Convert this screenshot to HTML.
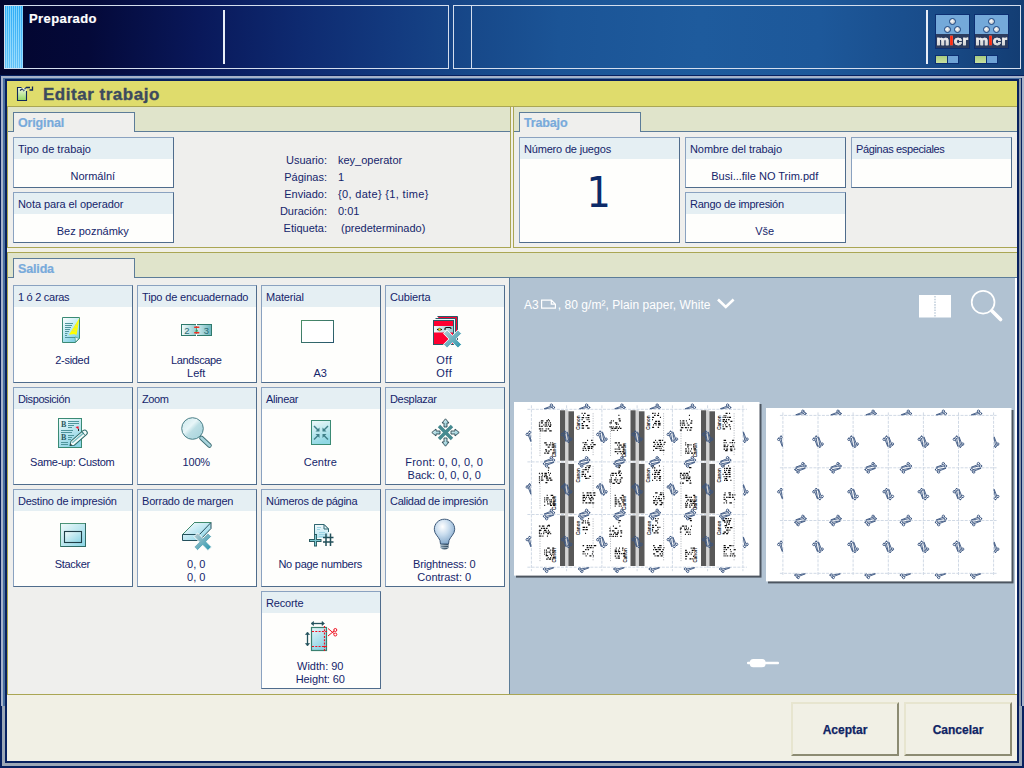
<!DOCTYPE html><html lang="es"><head><meta charset="utf-8"><title>Editar trabajo</title><style>
*{box-sizing:border-box;margin:0;padding:0}
html,body{width:1024px;height:768px;overflow:hidden}
body{position:relative;font-family:"Liberation Sans","DejaVu Sans",sans-serif;font-size:11px;color:#15256b;
 background:linear-gradient(92deg,#03062f 0px,#040939 90px,#09185a 200px,#0e2a70 300px,#133b80 400px,#174889 470px,#1b5496 560px,#1e5b9d 700px,#1d589a 820px,#194c8a 930px,#133d73 1024px);}
.abs{position:absolute}
#top{position:absolute;left:0;top:0;width:1024px;height:76px;overflow:hidden}
.pan{position:absolute;top:5px;height:64px;border:1px solid #d4deee}
.vsep{position:absolute;background:#e8eef8}
#stripe{position:absolute;left:5px;top:6px;width:18px;height:62px;background:linear-gradient(rgba(255,255,255,0),rgba(255,255,255,.25)),repeating-linear-gradient(90deg,#2eacf6 0,#2eacf6 1px,#7cd2fd 1px,#7cd2fd 2px)}
#prep{position:absolute;left:29px;top:11px;font-weight:bold;font-size:13px;letter-spacing:.4px;color:#fff;-webkit-text-stroke:.2px #fff;line-height:16px}
.micr{position:absolute;top:15px;width:33px;height:33px;background:#2c3c5e;outline:1px solid #0c2f72}
.micr .t{position:absolute;left:0;top:0;width:33px;height:19px;background:#74a9d9}
.micr b{position:absolute;left:-1px;top:18px;width:35px;text-align:center;font-size:13.5px;line-height:16px;letter-spacing:.5px;-webkit-text-stroke:.7px #e4e4e4;background:linear-gradient(#fff 25%,#c8c8c8 80%);-webkit-background-clip:text;background-clip:text;color:transparent;transform:scaleX(1.04)}
.micr b i{font-style:normal;-webkit-text-stroke:.7px #ff2a10;color:#ff2a10}
.micr s{position:absolute;width:7px;height:7px;border-radius:50%;background:radial-gradient(circle at 40% 40%,#fff,#a8b0b8);border:1px solid #1f457e;text-decoration:none}
.bar{position:absolute;top:56px;height:7px;outline:1px solid #0c2f72}
/* dialog frame */
#frame{position:absolute;left:0;top:75px;width:1024px;height:693px;background:#08215f}
#f1{position:absolute;left:1px;top:1px;right:1px;bottom:1px;background:#a7b3ca}
#f2{position:absolute;left:3px;top:3px;right:3px;bottom:3px;background:#4a70a0}
#f3{position:absolute;left:5px;top:4px;right:4px;bottom:4px;background:#08215f}
#dlg{position:absolute;left:7px;top:81px;width:1010px;height:680px;background:#f1f0e5;overflow:hidden}
#title{position:absolute;left:0;top:0;width:1010px;height:26px;background:#dfdc6c;border-bottom:1px solid #b4ac54}
#title span{position:absolute;left:36px;top:3px;font-weight:bold;font-size:17px;letter-spacing:.52px;color:#3c4a5e;-webkit-text-stroke:.35px #3c4a5e;line-height:22px}
.sec{position:absolute;background:#e0e4cb;border:1px solid #aaa654}
.sec .body{position:absolute;left:0;right:0;top:24px;bottom:0;background:#efefed;border-top:1px solid #5c7c98}
.tab{position:absolute;left:5px;top:5px;width:122px;height:20px;background:#efefed;border:1px solid #5c7c98;border-bottom:none;
 font-weight:bold;font-size:12.5px;letter-spacing:-.15px;color:#78aadb;-webkit-text-stroke:.2px #78aadb;padding:3px 0 0 4px;line-height:15px}
.box{position:absolute;background:#fefefc;border:1px solid #8aa2c0;border-right-color:#4f6c8c;border-bottom-color:#4f6c8c}
.box .h{position:absolute;left:0;top:0;right:0;height:21px;background:#e5eff3;padding:5px 0 0 4px;line-height:13px;white-space:nowrap}
.box .v{position:absolute;left:0;right:1.5px;text-align:center;line-height:13px;white-space:nowrap}
.kv{position:absolute;line-height:13px;white-space:nowrap}
.btn{position:absolute;top:621px;width:108px;height:54px;background:#f1f0e5;border:2px solid;border-color:#e7e5cf #8c8b72 #8c8b72 #e7e5cf;
 font-weight:bold;font-size:12px;text-align:center;line-height:53px;color:#0f2464;-webkit-text-stroke:.25px #0f2464}
#pv{position:absolute;left:502px;top:196px;width:508px;height:417px;background:#b1c2d2;border-left:1px solid #5c7c98;border-top:1px solid #5c7c98}
#pvt{position:absolute;left:14px;top:20px;font-size:12px;color:#fff;line-height:14px;white-space:nowrap;letter-spacing:.05px}
</style></head><body><div id="top"><div class="pan" style="left:4px;width:445px"></div><div id="stripe"></div><div id="prep">Preparado</div><div class="vsep" style="left:223px;top:10px;width:2px;height:54px"></div><div class="pan" style="left:453px;width:568px"></div><div class="vsep" style="left:471px;top:6px;width:1px;height:62px;background:#d4deee"></div><div class="vsep" style="left:926px;top:10px;width:2px;height:54px"></div><div class="micr" style="left:936px"><div class="t"></div><s style="left:12.7px;top:3.2px"></s><s style="left:7.5px;top:10.7px"></s><s style="left:17.7px;top:10.7px"></s><b>m<i>i</i>cr</b></div><div class="bar" style="left:936px;width:11px;background:linear-gradient(#a8cc80,#c8e0a0)"></div><div class="bar" style="left:948px;width:10px;background:#6fa3d6"></div><div class="micr" style="left:975px"><div class="t"></div><s style="left:12.7px;top:3.2px"></s><s style="left:7.5px;top:10.7px"></s><s style="left:17.7px;top:10.7px"></s><b>m<i>i</i>cr</b></div><div class="bar" style="left:975px;width:11px;background:linear-gradient(#a8cc80,#c8e0a0)"></div><div class="bar" style="left:987px;width:10px;background:#6fa3d6"></div></div><div id="frame"><div id="f1"></div><div id="f2"></div><div id="f3"></div><div class="abs" style="left:1019px;top:4px;width:2px;height:627px;background:#8c97a6"></div><div class="abs" style="left:1021px;top:3px;width:1px;height:628px;background:#08215f"></div><div class="abs" style="left:1022px;top:1px;width:2px;height:630px;background:#a7b3ca"></div><div class="abs" style="left:0;top:631px;width:1024px;height:62px;background:#08215f"></div><div class="abs" style="left:2px;top:631px;width:1020px;height:60px;background:#9ba7b6"></div><div class="abs" style="left:5px;top:631px;width:1014px;height:57px;background:#08215f"></div></div><div id="dlg"><div id="title"><svg class="abs" style="left:9px;top:5px" width="19" height="16" viewBox="0 0 19 16"><defs><linearGradient id="gt" x1="0" y1="0" x2="0" y2="1"><stop offset="0" stop-color="#f0f8e0"/><stop offset="1" stop-color="#94d860"/></linearGradient></defs><rect x="2" y="2" width="8.500" height="12.500" fill="url(#gt)"/><path d="M5.500 1.500 H1.500 V14.500 H10.500 V5" fill="none" stroke="#10285c" stroke-width="1.100"/><path d="M4 4.500 L6 3 L7.500 4.500 L10.500 1.500 H14 M16.500 .5 V4 H13.500" fill="none" stroke="#10285c" stroke-width="1.300"/><path d="M6 4.500 L10.500 2.800" stroke="#e8f0e0" stroke-width=".8"/></svg><span>Editar trabajo</span></div><div class="sec" style="left:0px;top:25px;width:504px;height:142px"><div class="body"></div><div class="tab">Original</div><div class="box" style="left:5px;top:30px;width:161px;height:51px"><div class="h">Tipo de trabajo</div><div class="v" style="top:32px">Normální</div></div><div class="box" style="left:5px;top:85px;width:161px;height:51px"><div class="h" style="letter-spacing:-0.08px">Nota para el operador</div><div class="v" style="top:32px">Bez poznámky</div></div><div class="kv" style="right:183px;top:47px;text-align:right">Usuario:</div><div class="kv" style="left:330px;top:47px">key_operator</div><div class="kv" style="right:183px;top:64px;text-align:right">Páginas:</div><div class="kv" style="left:330px;top:64px">1</div><div class="kv" style="right:183px;top:81px;text-align:right">Enviado:</div><div class="kv" style="left:330px;top:81px"><span style="letter-spacing:.33px">{0, date} {1, time}</span></div><div class="kv" style="right:183px;top:98px;text-align:right">Duración:</div><div class="kv" style="left:330px;top:98px">0:01</div><div class="kv" style="right:183px;top:115px;text-align:right">Etiqueta:</div><div class="kv" style="left:333px;top:115px">(predeterminado)</div></div><div class="sec" style="left:506px;top:25px;width:504px;height:142px;border-right:none"><div class="body"></div><div class="tab">Trabajo</div><div class="box" style="left:5px;top:30px;width:161px;height:106px"><div class="h" style="letter-spacing:-0.18px">Número de juegos</div><div class="v" style="top:30px;font-family:'DejaVu Sans Condensed','DejaVu Sans','Liberation Sans',sans-serif;font-size:42.5px;line-height:50px;color:#0c2a68">1</div></div><div class="box" style="left:171px;top:30px;width:161px;height:51px"><div class="h" style="letter-spacing:-0.09px">Nombre del trabajo</div><div class="v" style="top:32px">Busi...file NO Trim.pdf</div></div><div class="box" style="left:337px;top:30px;width:161px;height:51px"><div class="h" style="letter-spacing:-0.35px">Páginas especiales</div></div><div class="box" style="left:171px;top:85px;width:161px;height:51px"><div class="h" style="letter-spacing:-0.26px">Rango de impresión</div><div class="v" style="top:32px">Vše</div></div></div><div class="sec" style="left:0px;top:171px;width:1010px;height:443px;border-right:none"><div class="body"></div><div class="tab">Salida</div><div class="box" style="left:5px;top:32px;width:120px;height:98px"><div class="h" style="letter-spacing:-0.28px">1 ó 2 caras</div><div class="abs" style="left:0;top:0"><svg class="abs" style="left:48px;top:31px" width="19" height="27" viewBox="0 0 19 27" ><defs><linearGradient id="g1" x1="0" y1="0" x2=".6" y2="1"><stop offset="0" stop-color="#ffffff"/><stop offset=".5" stop-color="#c4ecf4"/><stop offset="1" stop-color="#7fd0e4"/></linearGradient></defs><path d="M.5 .5 H17.500 V21.500 L13.500 25.500 H.5 Z" fill="url(#g1)" stroke="#3a8a74" stroke-width="1"/><path d="M3 6.500 H11 M3 8.500 H10 M3 10.500 H9 M3 12.500 H8 M3 14.500 H7 M3 16.500 H5.500 M3 18.500 H5 M3 20.500 H13" stroke="#4f959c" stroke-width="1" fill="none"/><path d="M17.500 1 L7 17.800 L12 17 L14.500 18 Z" fill="#ffff00"/><path d="M13.5 7.5 l2 .7 M12 10.500 l2.500 .8 M10.500 13.500 l3 .8" stroke="#d8e070" stroke-width="1" fill="none"/><path d="M13 20 L17 21.500 L13.500 25 Z" fill="#e8f8fc" stroke="#3a8a74" stroke-width=".6"/></svg></div><div class="v" style="top:68px;letter-spacing:-0.3px">2-sided</div></div><div class="box" style="left:129px;top:32px;width:120px;height:98px"><div class="h" style="letter-spacing:-0.17px">Tipo de encuadernado</div><div class="abs" style="left:0;top:0"><svg class="abs" style="left:43px;top:38px" width="32" height="13" viewBox="0 0 32 13" ><defs><linearGradient id="g2a" x1="0" y1="0" x2="1" y2="0"><stop offset="0" stop-color="#f4fcfc"/><stop offset="1" stop-color="#8cc8cc"/></linearGradient><linearGradient id="g2b" x1="0" y1="0" x2="1" y2="0"><stop offset="0" stop-color="#d4eef0"/><stop offset="1" stop-color="#6cb4bc"/></linearGradient></defs><rect x=".5" y=".5" width="15.500" height="11" fill="url(#g2a)"/><rect x="15.5" y=".5" width="15" height="11" fill="url(#g2b)"/><rect x=".5" y=".5" width="30" height="11" fill="none" stroke="#2f7a6c"/><path d="M15.500 2 V10" stroke="#2f7a6c" stroke-width=".7"/><rect x="15" y="0" width="1" height="2" fill="#fff"/><rect x="15" y="10" width="1" height="2" fill="#fff"/><text x="6" y="9.800" font-family="Liberation Sans,sans-serif" font-size="9.500" fill="#2a6a72" text-anchor="middle">2</text><text x="25.500" y="9.800" font-family="Liberation Sans,sans-serif" font-size="9.500" fill="#2a6a72" text-anchor="middle">3</text><rect x="13" y="2.500" width="5.500" height="1.600" rx=".8" fill="#f03020"/><rect x="13" y="8" width="5.500" height="1.600" rx=".8" fill="#f03020"/><path d="M14 7.500 L15.700 5 L17.500 7.500 Z" fill="#3c9a60"/></svg></div><div class="v" style="top:68px;letter-spacing:-0.35px">Landscape</div><div class="v" style="top:81px">Left</div></div><div class="box" style="left:253px;top:32px;width:120px;height:98px"><div class="h" style="letter-spacing:-0.16px">Material</div><div class="abs" style="left:0;top:0"><svg class="abs" style="left:39px;top:34px" width="33" height="23" viewBox="0 0 33 23" ><defs><linearGradient id="g3" x1="0" y1="0" x2="1" y2="1"><stop offset="0" stop-color="#4c9068"/><stop offset="1" stop-color="#27566c"/></linearGradient></defs><rect x=".5" y=".5" width="32" height="22" fill="#fff" stroke="url(#g3)"/></svg></div><div class="v" style="top:81px">A3</div></div><div class="box" style="left:377px;top:32px;width:120px;height:98px"><div class="h" style="letter-spacing:-0.15px">Cubierta</div><div class="abs" style="left:0;top:0"><svg class="abs" style="left:46px;top:29px" width="31" height="34" viewBox="0 0 31 34" ><defs><linearGradient id="gx" x1="0" y1="0" x2="1" y2="1"><stop offset="0" stop-color="#b9cdd3"/><stop offset=".5" stop-color="#6fb1c0"/><stop offset="1" stop-color="#2796ad"/></linearGradient><linearGradient id="g4" x1="0" y1="0" x2="1" y2="0"><stop offset="0" stop-color="#f4fafa"/><stop offset="1" stop-color="#9cc8d0"/></linearGradient></defs><path d="M5.500 1.500 H25.500 V25 H22" fill="#ff0030" stroke="#2a5a68" stroke-width="1"/><path d="M3.500 3.500 H23.500 V27 H20" fill="#e8f4f8" stroke="#2a5a68" stroke-width="1"/><rect x="1.500" y="5.500" width="20" height="24" fill="#ff0030" stroke="#2a5a68" stroke-width="1"/><rect x="2" y="11" width="19" height="6.500" fill="url(#g4)"/><path d="M5 14.500 H10" stroke="#111" stroke-width="1.200"/><circle cx="7.500" cy="14.500" r="1.300" fill="#ffe000" stroke="#333" stroke-width=".5"/><path d="M13 15 V13.500 Q13 12.500 14.500 12.500 H18 Q19 12.500 19 14" stroke="#111" stroke-width="1.200" fill="none"/><g transform="translate(11.5,15)"><path d="M3.6 0 L9.0 5.4 L14.4 0 L18 3.6 L12.6 9.0 L18 14.4 L14.4 18 L9.0 12.6 L3.6 18 L0 14.4 L5.4 9.0 L0 3.6 Z" fill="url(#gx)" stroke="#fefefc" stroke-width="1" stroke-opacity=".9"/></g></svg></div><div class="v" style="top:68px;letter-spacing:0.5px">Off</div><div class="v" style="top:81px;letter-spacing:0.5px">Off</div></div><div class="box" style="left:5px;top:134px;width:120px;height:98px"><div class="h" style="letter-spacing:-0.4px">Disposición</div><div class="abs" style="left:0;top:0"><svg class="abs" style="left:44px;top:30px" width="32" height="31" viewBox="0 0 32 31" ><defs><linearGradient id="g5" x1="0" y1="0" x2=".5" y2="1"><stop offset="0" stop-color="#f4fcfc"/><stop offset="1" stop-color="#8cd4e4"/></linearGradient></defs><rect x=".5" y=".5" width="23" height="29" fill="url(#g5)" stroke="#3a8a74"/><text x="3" y="9" font-family="Liberation Serif,serif" font-weight="bold" font-size="8" fill="#2a5a60">B</text><text x="3" y="22" font-family="Liberation Serif,serif" font-weight="bold" font-size="8" fill="#2a5a60">B</text><path d="M10 3.500 H21 M10 5.500 H21 M10 7.500 H16 M10 9.500 H14 M3 12.500 H15 M3 14.500 H14 M10 17.500 H16 M10 19.500 H14 M10 21.500 H13 M3 24.500 H10 M3 26.500 H10" stroke="#4f959c" stroke-width="1" fill="none"/><path d="M17.500 9 L20.500 8.300 L20.700 11.500 Z" fill="#f01030"/><path d="M20.500 11 V13" stroke="#222" stroke-width="1"/><g transform="translate(12,27.500) rotate(-41)"><path d="M0 0 L3.500 -2.600 H19.500 Q22 -2.600 22 0 Q22 2.600 19.500 2.600 H3.500 Z" fill="#f4fafa" stroke="#2a6a68" stroke-width="1"/><path d="M3.500 -.6 H19" stroke="#7cc0c4" stroke-width="1.500"/><path d="M18 -2.600 V2.600" stroke="#2a6a68" stroke-width=".8"/><path d="M0 0 L1.800 -1.100 V1.100 Z" fill="#222"/></g></svg></div><div class="v" style="top:68px;letter-spacing:-0.29px">Same-up: Custom</div></div><div class="box" style="left:129px;top:134px;width:120px;height:98px"><div class="h" style="letter-spacing:-0.4px">Zoom</div><div class="abs" style="left:0;top:0"><svg class="abs" style="left:42px;top:28px" width="33" height="33" viewBox="0 0 33 33" ><defs><linearGradient id="g6" x1="0" y1="0" x2="1" y2="1"><stop offset="0" stop-color="#c8e6ea"/><stop offset=".4" stop-color="#e8f6f8"/><stop offset=".55" stop-color="#bcdee4"/><stop offset="1" stop-color="#a4d2da"/></linearGradient></defs><path d="M21.500 22 L29.500 29.500" stroke="#3e6e74" stroke-width="4.600" stroke-linecap="round"/><path d="M21.500 22 L29.500 29.500" stroke="#a8d4dc" stroke-width="2.800" stroke-linecap="round"/><circle cx="12.500" cy="12.500" r="10.800" fill="url(#g6)" stroke="#4c8088" stroke-width="1"/></svg></div><div class="v" style="top:68px;letter-spacing:-0.2px">100%</div></div><div class="box" style="left:253px;top:134px;width:120px;height:98px"><div class="h" style="letter-spacing:-0.29px">Alinear</div><div class="abs" style="left:0;top:0"><svg class="abs" style="left:49px;top:32px" width="21" height="26" viewBox="0 0 21 26" ><defs><linearGradient id="g7" x1="0" y1="0" x2=".3" y2="1"><stop offset="0" stop-color="#f0fafa"/><stop offset="1" stop-color="#90d8e4"/></linearGradient></defs><rect x=".5" y=".5" width="19" height="24" fill="url(#g7)" stroke="#3a8a74"/><g stroke="#3f8088" stroke-width="1.500" fill="#3f8088"><path d="M3 6 L7.500 10.500"/><path d="M17 6 L12.500 10.500"/><path d="M3 19.500 L7.500 15"/><path d="M17 19.500 L12.500 15"/></g><path d="M4.500 11.500 H8.500 V7.500 Z M15.500 11.500 H11.500 V7.500 Z M4.500 14 H8.500 V18 Z M15.500 14 H11.500 V18 Z" fill="#3f8088"/></svg></div><div class="v" style="top:68px">Centre</div></div><div class="box" style="left:377px;top:134px;width:120px;height:98px"><div class="h" style="letter-spacing:-0.32px">Desplazar</div><div class="abs" style="left:0;top:0"><svg class="abs" style="left:45px;top:30px" width="29" height="29" viewBox="0 0 29 29" ><defs><linearGradient id="g8" x1="0" y1="0" x2="1" y2="1"><stop offset="0" stop-color="#e8f6f8"/><stop offset="1" stop-color="#7cc0cc"/></linearGradient></defs><g stroke="#2c4a54" stroke-width=".9" fill="url(#g8)"><path d="M14.500 .8 L18 5 H16 V9 H13 V5 H11 Z"/><path d="M14.500 28.200 L18 24 H16 V20 H13 V24 H11 Z"/><path d="M.8 14.500 L5 11 V13 H9 V16 H5 V18 Z"/><path d="M28.200 14.500 L24 11 V13 H20 V16 H24 V18 Z"/></g><path d="M8 8 L21 21 M21 8 L8 21" stroke="#468a90" stroke-width="3.400"/></svg></div><div class="v" style="top:68px;letter-spacing:0.19px">Front: 0, 0, 0, 0</div><div class="v" style="top:81px">Back: 0, 0, 0, 0</div></div><div class="box" style="left:5px;top:236px;width:120px;height:98px"><div class="h" style="letter-spacing:-0.23px">Destino de impresión</div><div class="abs" style="left:0;top:0"><svg class="abs" style="left:46px;top:33px" width="27" height="25" viewBox="0 0 27 25" ><defs><linearGradient id="g9" x1="0" y1="0" x2="1" y2="1"><stop offset="0" stop-color="#f0fafa"/><stop offset="1" stop-color="#88d4e4"/></linearGradient></defs><rect x=".5" y=".5" width="25" height="23" fill="url(#g9)" stroke="#2f6a64"/><path d="M.5 24 V.5 H25" stroke="#4c9478" fill="none"/><rect x="4.500" y="8.500" width="17" height="11" fill="url(#g9)" stroke="#1f3f48" stroke-width="1.100"/></svg></div><div class="v" style="top:68px;letter-spacing:-0.32px">Stacker</div></div><div class="box" style="left:129px;top:236px;width:120px;height:98px"><div class="h" style="letter-spacing:-0.21px">Borrado de margen</div><div class="abs" style="left:0;top:0"><svg class="abs" style="left:43px;top:31px" width="32" height="31" viewBox="0 0 32 31" ><defs><linearGradient id="gx2" x1="0" y1="0" x2="1" y2="1"><stop offset="0" stop-color="#b9cdd3"/><stop offset=".5" stop-color="#6fb1c0"/><stop offset="1" stop-color="#2796ad"/></linearGradient><linearGradient id="g10" x1="0" y1="0" x2="1" y2="1"><stop offset="0" stop-color="#ffffff"/><stop offset="1" stop-color="#7fd0e4"/></linearGradient></defs><path d="M1.500 13.500 L13.500 1.500 H30 V7.500 L18.500 19.500 H1.500 Z" fill="url(#g10)" stroke="#24505c" stroke-width="1"/><path d="M1.500 13.500 H18.500 L30 1.500 M18.500 13.500 V19.500" fill="none" stroke="#24505c" stroke-width="1"/><path d="M1.500 13.500 L13.500 1.500 H30" fill="none" stroke="#3f8a6c" stroke-width="1"/><g transform="translate(13,12)"><path d="M3.6 0 L8.75 5.15 L13.9 0 L17.5 3.6 L12.35 8.75 L17.5 13.9 L13.9 17.5 L8.75 12.35 L3.6 17.5 L0 13.9 L5.15 8.75 L0 3.6 Z" fill="url(#gx2)" stroke="#fefefc" stroke-width="1" stroke-opacity=".9"/></g></svg></div><div class="v" style="top:68px">0, 0</div><div class="v" style="top:81px">0, 0</div></div><div class="box" style="left:253px;top:236px;width:120px;height:98px"><div class="h" style="letter-spacing:-0.28px">Números de página</div><div class="abs" style="left:0;top:0"><svg class="abs" style="left:46px;top:33px" width="27" height="25" viewBox="0 0 27 25" ><defs><linearGradient id="g11" x1="0" y1="0" x2="0" y2="1"><stop offset="0" stop-color="#f4fafc"/><stop offset="1" stop-color="#b4e4f0"/></linearGradient></defs><path d="M6.500 10 V1.500 H16 L20.500 6 V9" fill="url(#g11)" stroke="#2f6670" stroke-width="1"/><path d="M6.500 1.500 H16 L20.500 6 V15 H6.500 Z" fill="url(#g11)" stroke="none"/><path d="M6.500 11 V1.500 H16 L20.500 6 V9 M16 1.500 V6 H20.500" fill="none" stroke="#2f6670" stroke-width="1"/><path d="M9 4.500 H13 M9 6.500 H12 M11 9.500 H17 M11 11.500 H17 M11 13.500 H15" stroke="#9cd4e4" stroke-width="1"/><path d="M7.500 11 V23.500 M1 17.500 H13.500" stroke="#2a5a60" stroke-width="3"/><path d="M7.500 12 V22.500 M2 17.500 H12.500" stroke="#7cc8d0" stroke-width="1.200"/><path d="M18 10.500 V23 M22.500 10.500 V23 M15 14.500 H25.500 M15 19 H25.500" stroke="#23505a" stroke-width="1.500"/></svg></div><div class="v" style="top:68px;letter-spacing:-0.25px">No page numbers</div></div><div class="box" style="left:377px;top:236px;width:120px;height:98px"><div class="h" style="letter-spacing:-0.28px">Calidad de impresión</div><div class="abs" style="left:0;top:0"><svg class="abs" style="left:47px;top:28px" width="23" height="33" viewBox="0 0 23 33" ><defs><radialGradient id="g12" cx=".4" cy=".3" r=".75"><stop offset="0" stop-color="#ffffff"/><stop offset=".45" stop-color="#c8dcee"/><stop offset="1" stop-color="#7ea4c8"/></radialGradient><linearGradient id="g12b" x1="0" y1="0" x2="1" y2="0"><stop offset="0" stop-color="#7e98ac"/><stop offset=".5" stop-color="#4e687c"/><stop offset="1" stop-color="#30485c"/></linearGradient></defs><path d="M11.500 1.200 C5.500 1.200 1.300 5.800 1.300 11.300 C1.300 16 5.500 18.500 7 22.500 L7.500 26 H15.500 L16 22.500 C17.500 18.500 21.700 16 21.700 11.300 C21.700 5.800 17.500 1.200 11.500 1.200 Z" fill="url(#g12)" stroke="#3c5878" stroke-width="1"/><path d="M7.500 26 H15.500 V30 Q11.500 33 7.500 30 Z" fill="url(#g12b)"/><path d="M7.500 27.500 H15.500 M7.500 29.500 H15.500" stroke="#b4c4d0" stroke-width=".7"/></svg></div><div class="v" style="top:68px;letter-spacing:-0.13px">Brightness: 0</div><div class="v" style="top:81px">Contrast: 0</div></div><div class="box" style="left:253px;top:338px;width:120px;height:98px"><div class="h" style="letter-spacing:-0.17px">Recorte</div><div class="abs" style="left:0;top:0"><svg class="abs" style="left:41px;top:27px" width="37" height="34" viewBox="0 0 37 34" ><defs><linearGradient id="g13" x1="0" y1="0" x2=".5" y2="1"><stop offset="0" stop-color="#e8f6fa"/><stop offset="1" stop-color="#8cd4e4"/></linearGradient></defs><rect x="8.500" y="8.500" width="15" height="23" fill="url(#g13)" stroke="#3a8070" stroke-width="1.200"/><path d="M9 12.500 H24 M9 27.500 H24 M21.500 7 V32" stroke="#f01020" stroke-width="1.200" stroke-dasharray="2 1.300" fill="none"/><g stroke="#23525c" stroke-width="1.300" fill="#23525c"><path d="M9.500 4.500 H20"/><path d="M8 4.500 L10.500 2.500 V6.500 Z M21.500 4.500 L19 2.500 V6.500 Z" stroke-width=".6"/><path d="M4.500 14.500 V25.500"/><path d="M4.500 13 L2.500 15.500 H6.500 Z M4.500 27 L2.500 24.500 H6.500 Z" stroke-width=".6"/></g><g stroke="#f01020" stroke-width="1" fill="none"><path d="M25 9.500 L31 14.500 M25 17 L31 12"/><circle cx="32.300" cy="11" r="1.500"/><circle cx="32.300" cy="15.500" r="1.500"/></g></svg></div><div class="v" style="top:68px">Width: 90</div><div class="v" style="top:81px;letter-spacing:-0.1px">Height: 60</div></div></div><div id="pv"><div id="pvt">A3 <span style="display:inline-block;width:15.5px"></span>, 80 g/m², Plain paper, White</div><svg class="abs" style="left:0;top:0" width="505" height="416" viewBox="510 278 505 416" font-family="DejaVu Sans,Liberation Sans,sans-serif"><path d="M541.6 300.1 H551.3 L555.4 304.2 V308.1 H541.6 Z M551.3 300.1 V304.2 H555.4" fill="none" stroke="#fff" stroke-width="1.2"/><path d="M718 299.5 L725.8 307 L733.6 299.5" fill="none" stroke="#fff" stroke-width="2.6"/><rect x="919" y="295" width="32" height="22.500" fill="#fff"/><path d="M935 296 V317" stroke="#b1c2d2" stroke-width="1.200" stroke-dasharray="1.600 1.100"/><circle cx="983.100" cy="302.200" r="11.400" fill="none" stroke="#fff" stroke-width="1.700"/><path d="M991.800 310.800 L1000.600 319.600" stroke="#fff" stroke-width="3.600" stroke-linecap="round"/><rect x="747" y="661.800" width="32" height="2.400" rx="1" fill="#fff"/><rect x="749.800" y="659" width="15.800" height="8.200" rx="3.500" fill="#fff"/><rect x="516" y="404" width="245.5" height="173.6" fill="#4c5560"/><rect x="514" y="402" width="245.5" height="173.6" fill="#fff"/><path d="M531.4 405.3V571.2M566.6 405.3V571.2M601.9 405.3V571.2M637.1 405.3V571.2M672.4 405.3V571.2M707.6 405.3V571.2M742.9 405.3V571.2M527.4 409.3H746.9M527.4 461.9H746.9M527.4 514.5H746.9M527.4 567.2H746.9" stroke="#d0d9e5" stroke-width="1" stroke-dasharray="3 1.2" fill="none"/><g fill="#d4d4d4"><rect x="565.1" y="410.3" width="3.2" height="155.9"/><rect x="635.6" y="410.3" width="3.2" height="155.9"/><rect x="706.1" y="410.3" width="3.2" height="155.9"/></g><g fill="#585858"><rect x="560" y="410.3" width="5.1" height="50.4"/><rect x="568.4" y="411.3" width="5.6" height="49.4"/><rect x="560" y="462.9" width="5.1" height="50.4"/><rect x="568.4" y="463.9" width="5.6" height="49.4"/><rect x="560" y="515.5" width="5.1" height="50.5"/><rect x="568.4" y="516.5" width="5.6" height="49.5"/><rect x="630.5" y="410.3" width="5.1" height="50.4"/><rect x="638.9" y="411.3" width="5.6" height="49.4"/><rect x="630.5" y="462.9" width="5.1" height="50.4"/><rect x="638.9" y="463.9" width="5.6" height="49.4"/><rect x="630.5" y="515.5" width="5.1" height="50.5"/><rect x="638.9" y="516.5" width="5.6" height="49.5"/><rect x="701" y="410.3" width="5.1" height="50.4"/><rect x="709.4" y="411.3" width="5.6" height="49.4"/><rect x="701" y="462.9" width="5.1" height="50.4"/><rect x="709.4" y="463.9" width="5.6" height="49.4"/><rect x="701" y="515.5" width="5.1" height="50.5"/><rect x="709.4" y="516.5" width="5.6" height="49.5"/></g><path d="M540.9 420.8h2.5M546.2 420.8h2M549 420.8h1M538.9 422.8h1M540.9 422.8h2M544.7 422.8h2.5M548.2 422.8h1M550 422.8h1M538.9 424.8h1M543.4 424.8h1M545.4 424.8h1.5M547.9 424.8h1M549.9 424.8h1.5M538.9 426.4h1.5M541.2 426.4h1.5M544.7 426.4h1M546.5 426.4h1M549 426.4h2M538.9 428.8h2.5M542.2 428.8h1M545.7 428.8h1M547.7 428.8h1.5M539.9 430.8h1.5M542.4 430.8h1M544.2 430.8h2.5M549.2 430.8h2.5M547.9 419.7h1M544.2 442.8h2.5M550.2 442.8h1M552.2 442.8h1M545.7 444.8h2M548.7 444.8h2M551.7 444.8h2.5M547.7 447.2h2M551.7 447.2h2.5M545.2 449.6h1.5M550.2 449.6h1.5M545.7 451.2h1.5M548.2 451.2h1.5M544.2 453.2h1.5M546.7 453.2h2.5M552.2 453.2h1.5M581.6 413.3h1M584.1 413.3h1.5M583.1 415.3h1M587.1 415.3h2.5M581.6 417.7h2.5M585.6 417.7h1M587.4 417.7h2M581.6 419.7h1M586.6 419.7h1M588.4 419.7h1M583.1 421.7h2M588.6 421.7h1.5M581.6 423.7h1.5M581.6 425.7h2.5M585.6 425.7h2.5M581.6 428.1h2.5M587.1 428.1h2.5M587.1 440.3h1M591.1 440.3h1.5M582.6 442.7h1M584.6 442.7h2M591.6 442.7h2M584.1 444.7h1.5M586.4 444.7h1M590.4 444.7h1M593.2 444.7h2.5M583.6 446.7h1.5M587.4 446.7h2.5M590.9 446.7h2.5M582.6 448.3h1M584.6 448.3h1.5M587.6 448.3h2.5M590.9 448.3h1.5M582.6 450.3h1.5M585.6 450.3h1M588.1 450.3h1M610.9 420.8h1M612.9 420.8h1M618.9 420.8h2M609.4 422.8h2.5M614.9 422.8h2.5M615.9 424.4h1M617.7 424.4h1M609.4 426.8h2.5M612.7 426.8h1M615.5 426.8h2M619 426.8h1M611.4 428.4h2M614.2 428.4h2.5M617.7 428.4h1.5M620 428.4h1.5M611.4 430.4h1M613.4 430.4h1M616.9 430.4h1M618.4 415.3h1M618.4 418.9h2M614.7 442.8h2.5M618 442.8h2M617.2 445.2h1M619.2 445.2h2.5M623.2 445.2h2M618.2 447.2h1.5M621.2 447.2h2.5M614.7 449.2h1M616.5 449.2h1M618.3 449.2h2M622.8 449.2h1.5M614.7 451.6h2M617.5 451.6h1M619.3 451.6h2M622.3 451.6h1.5M617.2 453.6h1M620.7 453.6h1M623.2 453.6h2M652.1 413.3h1.5M654.6 413.3h1M658.1 413.3h1M654.1 415.3h1.5M657.1 415.3h2M652.1 417.3h2M659.9 417.3h1M652.1 419.7h1M655.1 421.3h2M657.9 421.3h2M654.1 423.3h2.5M658.1 423.3h2.5M653.1 424.9h1M655.6 424.9h1M658.1 424.9h2.5M652.1 427.3h2M657.6 427.3h1.5M655.1 440.3h1M658.6 440.3h2.5M661.9 440.3h1M653.1 442.3h2M656.6 442.3h1M659.6 442.3h1.5M664.1 442.3h1.5M654.6 444.3h1M657.1 444.3h2M660.1 444.3h2M663.6 444.3h1M653.1 446.3h2M656.6 446.3h1M658.4 446.3h2.5M661.7 446.3h1M655.1 448.3h2.5M658.6 448.3h1M660.6 448.3h1M653.1 450.3h1M659.6 450.3h2M662.4 450.3h2M679.9 420.8h1M682.4 420.8h2M685.9 420.8h1M690.9 420.8h1.5M679.9 423.2h1.5M682.2 423.2h2.5M686.7 423.2h1M690.2 423.2h2M679.9 425.2h1M681.9 425.2h1M683.7 425.2h1.5M687.5 425.2h2M680.9 427.6h2.5M684.9 427.6h2M687.7 427.6h1M690.2 427.6h2M679.9 430h2M686.9 430h1M689.4 430h2M688.9 415.3h1M688.9 419.3h1M685.2 442.8h1M685.2 444.8h1M687 444.8h2.5M690.5 444.8h1M693 444.8h1M687.2 446.8h1.5M693 446.8h1M685.2 448.8h1.5M688.2 448.8h1M691 448.8h1M693.5 448.8h2.5M685.2 451.2h2M688.2 451.2h1M690.2 451.2h1M685.2 453.2h1M687 453.2h2.5M691 453.2h2M693.8 453.2h1M725.6 413.3h2M729.1 413.3h1M723.6 415.7h1M725.4 415.7h1M722.6 417.3h1M724.4 417.3h1.5M726.7 417.3h1M728.5 417.3h2.5M722.6 419.7h2.5M726.1 419.7h1M728.1 419.7h1.5M722.6 421.3h1.5M724.9 421.3h2M730.4 421.3h2M724.1 422.9h1M726.6 422.9h1M722.6 424.9h1M725.1 424.9h1M728.6 424.9h1.5M722.6 426.5h1M725.6 426.5h2M729.6 426.5h1M722.6 428.9h2.5M729.9 428.9h1M723.6 440.3h2.5M732.1 440.3h2M723.6 442.7h1M725.6 442.7h1M729.6 442.7h1M731.6 442.7h1.5M734.1 442.7h1M723.6 445.1h2M727.4 445.1h1M732.4 445.1h1M723.6 446.7h2M726.4 446.7h1.5M729.9 446.7h2.5M733.2 446.7h1M723.6 449.1h1.5M726.1 449.1h2M729.9 449.1h2.5M734.2 449.1h1M725.1 450.7h2.5M730.4 450.7h2M538.9 473.4h1M541.4 473.4h1.5M544.4 473.4h2.5M549.9 473.4h1M541.9 475h1M544.4 475h2.5M548.9 475h1M538.9 476.6h1M541.4 476.6h1M543.9 476.6h1.5M546.2 476.6h1.5M538.9 478.2h1M541.4 478.2h1M545.9 478.2h2M548.7 478.2h2.5M538.9 480.2h1M540.9 480.2h2.5M546.4 480.2h2.5M549.9 480.2h2.5M538.9 482.6h1M545.4 482.6h2M547.9 467.9h1.5M547.9 470.3h1M547.9 472.7h1M546.7 495.4h1M550.7 495.4h2.5M544.2 497.8h1M546.2 497.8h2.5M552.2 497.8h2.5M544.2 499.8h1M546.2 499.8h1.5M548.7 499.8h1M550.5 499.8h1.5M544.2 501.8h1M547 501.8h1M549.5 501.8h2.5M552.8 501.8h2.5M547.2 503.8h1.5M549.5 503.8h1.5M552.5 503.8h2M544.2 505.4h1M550 505.4h2M553 505.4h2M586.6 465.9h1M588.4 465.9h2.5M585.1 467.5h1.5M588.1 467.5h2M582.6 469.5h1M584.4 469.5h2.5M587.7 469.5h1M581.6 471.9h2.5M587.1 471.9h1.5M581.6 474.3h2.5M584.9 474.3h1M581.6 476.3h1M584.1 476.3h2M589.1 476.3h2M585.1 478.3h2.5M588.4 478.3h1M582.6 492.9h1M586.6 492.9h2M589.4 492.9h2M592.9 492.9h2.5M582.6 495.3h2.5M586.6 495.3h2.5M589.9 495.3h2M593.4 495.3h2M582.6 497.3h2.5M585.9 497.3h1M588.4 497.3h1M590.9 497.3h2M582.6 498.9h1M585.1 498.9h1M588.9 498.9h2.5M592.4 498.9h1.5M582.6 500.5h2.5M590.1 500.5h1.5M582.6 502.9h1M585.4 502.9h2M588.4 502.9h2.5M591.7 502.9h2.5M611.4 473.4h2.5M614.7 473.4h2M618.2 473.4h1M620.7 473.4h1M610.4 475.4h1M612.2 475.4h1.5M616 475.4h1M619 475.4h2M610.9 477.8h1M615.4 477.8h1M620.7 477.8h2M609.4 479.8h2.5M613.9 479.8h2.5M617.2 479.8h1M619.7 479.8h1.5M609.4 481.8h2.5M615.7 481.8h1.5M619.7 481.8h1.5M612.4 483.4h2.5M617.4 483.4h2.5M618.4 465.9h2.5M618.4 467.5h1.5M618.4 471.1h2.5M618.4 472.7h1.5M614.7 495.4h1M621.7 495.4h2M614.7 497.8h2M619.7 497.8h2.5M614.7 499.8h2M617.7 499.8h1M621.2 499.8h1.5M623.5 499.8h1M614.7 501.8h2M617.7 501.8h2M622.2 501.8h1.5M614.7 503.8h2.5M618.7 503.8h2.5M614.7 506.2h1M618.7 506.2h1M620.7 506.2h1M652.1 465.9h2M658.9 465.9h1M652.1 467.9h1M653.9 467.9h1.5M654.1 470.3h1M655.9 470.3h1.5M658.9 470.3h2M654.6 472.3h2M657.6 472.3h2.5M652.1 474.3h1M654.1 474.3h2M657.1 474.3h2.5M654.1 476.7h1.5M656.6 476.7h1M659.1 476.7h2M654.1 478.3h1.5M658.6 478.3h2M652.1 480.3h1M656.4 480.3h1M659.2 480.3h1.5M655.1 492.9h2.5M660.1 492.9h1.5M662.6 492.9h1M659.6 494.5h2.5M662.9 494.5h1M653.1 496.5h1M655.9 496.5h1M658.4 496.5h1M662.9 496.5h1.5M655.1 498.5h1M657.6 498.5h2.5M660.9 498.5h1M663.4 498.5h1M653.1 500.5h2.5M656.4 500.5h1M659.2 500.5h2.5M653.1 502.9h2M656.6 502.9h1.5M660.9 502.9h2.5M655.1 504.5h2M659.6 504.5h2.5M679.9 473.4h2M683.4 473.4h1.5M685.7 473.4h2.5M679.9 475h1M681.9 475h2.5M685.2 475h1M687.2 475h1.5M679.9 477h1M683.4 477h1.5M685.7 477h2M688.5 477h2M681.4 478.6h1M683.2 478.6h1.5M685.7 478.6h1M687.7 478.6h2.5M685.9 480.6h2.5M689.9 480.6h1M679.9 483h1M681.9 483h2M689.4 483h2M688.9 467.5h2.5M688.9 471.9h1M685.2 495.4h2M693.2 495.4h2M685.2 497.4h2.5M688.7 497.4h1M690.5 497.4h1.5M687.2 499.8h2M690 499.8h1.5M692.3 499.8h1M686.2 501.4h1M689.7 501.4h2.5M693.2 501.4h2.5M685.2 503.4h1M687 503.4h1M690.5 503.4h1M692.3 503.4h2M685.2 505h2.5M689.2 505h1M691 505h1.5M694 505h1M685.2 507h2M689.2 507h1.5M693.7 507h2.5M723.6 465.9h1M728.1 465.9h1M724.1 468.3h1M725.9 468.3h2M728.9 468.3h2M724.1 470.3h1M726.1 470.3h1M728.1 470.3h2.5M724.1 472.3h2M727.9 472.3h2.5M722.6 474.3h1M725.1 474.3h2.5M728.6 474.3h2M723.6 476.7h1M725.6 476.7h2M728.6 476.7h2M724.6 478.7h2.5M724.1 480.3h1M725.9 480.3h2M730.4 480.3h1M724.6 492.9h1M728.4 492.9h2.5M723.6 494.9h2M728.9 494.9h2M731.9 494.9h1.5M734.4 494.9h1M723.6 497.3h1M726.1 497.3h1.5M728.4 497.3h2.5M731.9 497.3h2M723.6 499.3h2M734.1 499.3h1M725.6 500.9h1.5M723.6 502.9h1M726.1 502.9h1M729.4 502.9h2.5M538.9 526h1.5M541.9 526h2.5M546.9 526h1M548.7 526h1M540.9 528.4h1.5M543.2 528.4h2M546 528.4h1.5M538.9 530.4h2.5M543.9 530.4h2.5M547.9 530.4h1M538.9 532h1M543.4 532h1M545.4 532h2M548.2 532h2M538.9 533.6h1M540.7 533.6h1M543.2 533.6h1M547.2 533.6h2M550.2 533.6h1M538.9 536h2.5M542.4 536h1M546.9 536h1M547.9 525.3h2M547.2 548h2.5M552.2 548h2M544.2 550h1M546 550h1M549.8 550h1M551.8 550h1.5M544.2 552h1M546 552h1.5M548.5 552h2M552 552h2.5M544.2 554h1M546 554h1M549.8 554h1.5M552.3 554h1M545.7 555.6h2.5M551 555.6h1M547.7 557.6h1M550.2 557.6h1M552.7 557.6h1.5M546.2 559.2h1.5M548.7 559.2h2.5M552.2 559.2h1M588.1 518.5h1M582.6 520.9h1.5M584.9 520.9h1M587.4 520.9h1M581.6 522.9h2M585.1 522.9h1M587.1 522.9h2.5M588.1 524.9h2M582.6 527.3h2.5M585.9 527.3h1.5M582.6 529.7h2M585.4 529.7h2.5M585.1 533.3h1M582.6 545.5h1.5M586.6 545.5h1.5M588.9 545.5h1M590.7 545.5h1.5M593.7 545.5h2.5M586.6 547.5h2M589.6 547.5h2M592.6 547.5h1M585.1 549.5h1.5M587.6 549.5h1.5M582.6 551.5h2M592.4 551.5h1M582.6 553.9h1M584.6 553.9h1M587.1 553.9h1M591.9 553.9h1M585.6 555.9h1M589.4 555.9h2M592.9 555.9h1M612.9 526h1M619.4 526h1M609.4 528.4h1M614.7 528.4h2.5M609.4 530.8h1.5M611.9 530.8h2.5M617.7 530.8h1M620.2 530.8h2M613.9 532.8h2M616.9 532.8h2M620.7 532.8h1.5M609.4 534.4h2.5M612.9 534.4h1M615.4 534.4h2.5M609.4 536.4h2M612.4 536.4h1.5M614.9 536.4h1M616.7 536.4h1M620.2 536.4h1.5M618.4 520.5h2.5M618.4 522.5h1M615.7 548h1M619 548h1M622 548h1.5M614.7 550h2M618.2 550h1M622.2 550h1M614.7 551.6h2.5M618.2 551.6h2M614.7 553.6h1M616.5 553.6h1.5M619 553.6h1M620.8 553.6h1M622.6 553.6h2.5M614.7 556h1.5M617.7 556h2M623.2 556h2M615.7 558h1M617.5 558h2.5M653.1 518.5h1M655.1 518.5h1M657.6 518.5h1M655.1 520.9h2.5M657.1 522.9h1M652.1 525.3h1.5M655.1 525.3h1.5M652.1 527.3h2M657.1 527.3h1.5M659.4 527.3h1M652.1 529.3h1M657.6 529.3h1M652.1 530.9h1M655.1 530.9h2.5M653.6 532.9h2M656.6 532.9h2M653.1 545.5h1.5M659.1 545.5h2.5M654.1 547.5h1.5M657.6 547.5h2M660.4 547.5h1M663.4 547.5h1M653.1 549.5h1M654.9 549.5h2.5M658.4 549.5h2.5M662.4 549.5h1.5M656.1 551.5h2.5M660.9 551.5h2M653.1 553.9h2M659.6 553.9h1.5M662.1 553.9h1M654.6 555.9h1M656.6 555.9h2.5M660.6 555.9h2M681.9 526h2.5M685.4 526h1.5M690.9 526h1M679.9 528h2M684.2 528h1M686 528h1M688 528h1M679.9 529.6h1M684.4 529.6h2M687.4 529.6h1M689.9 529.6h1M679.9 532h1.5M685.9 532h2.5M689.4 532h1M684.9 534.4h1M687.9 534.4h1M689.7 534.4h1M688.9 518.5h2.5M689.9 520.5h2M690.7 548h1M692.5 548h2.5M685.2 550.4h1.5M691.7 550.4h2M685.2 552.4h2.5M689.2 552.4h1M691.7 552.4h1M685.2 554h1M687.7 554h1.5M690.7 554h1M685.2 556.4h2M693 556.4h1M685.2 558.8h1.5M689.5 558.8h2M692.3 558.8h1M722.6 518.5h1M725.1 518.5h2M727.9 518.5h1M730.4 518.5h1M722.6 520.5h2.5M726.6 520.5h1M728.4 520.5h2.5M724.1 522.1h1.5M726.6 522.1h1.5M728.9 522.1h1M726.1 524.1h1M727.9 524.1h2M724.6 525.7h2.5M725.1 527.7h1M726.9 527.7h2M729.9 527.7h2.5M726.1 530.1h2.5M729.4 530.1h1M723.6 532.1h2.5M727.6 532.1h1M722.6 533.7h2M726.1 533.7h2M723.6 545.5h2M729.1 545.5h2.5M732.6 545.5h1M723.6 547.5h2.5M727.1 547.5h2M723.6 549.5h1M725.6 549.5h1.5M729.9 549.5h1M733.7 549.5h2M723.6 551.5h1.5M730.6 551.5h1M723.6 553.9h1M725.6 553.9h1M730.4 553.9h1M732.4 553.9h2M723.6 555.9h1M725.4 555.9h1M727.2 555.9h1M729.7 555.9h1.5M732.2 555.9h1M734 555.9h1.5" stroke="#0a0a0a" stroke-width="1.25" fill="none"/><path d="M540 421.3V456.3M593.1 413.3V455.3M610.5 421.3V456.3M663.6 413.3V455.3M681 421.3V456.3M734.1 413.3V455.3M540 473.9V508.9M593.1 465.9V507.9M610.5 473.9V508.9M663.6 465.9V507.9M681 473.9V508.9M734.1 465.9V507.9M540 526.5V561.5M593.1 518.5V560.5M610.5 526.5V561.5M663.6 518.5V560.5M681 526.5V561.5M734.1 518.5V560.5" stroke="#9aa0a8" stroke-width=".8" stroke-dasharray="1 1.4" fill="none"/><g fill="#1a1a1a" font-family="Liberation Sans,sans-serif"><text x="553" y="457.3" font-size="4.6" font-weight="bold" transform="rotate(-90 553 457.3)" dy="3">Canon</text><text x="577" y="429.8" font-size="4.6" font-weight="bold" transform="rotate(-90 577 429.8)" dy="3">Canon</text><text x="623.5" y="457.3" font-size="4.6" font-weight="bold" transform="rotate(-90 623.5 457.3)" dy="3">Canon</text><text x="647.5" y="429.8" font-size="4.6" font-weight="bold" transform="rotate(-90 647.5 429.8)" dy="3">Canon</text><text x="694" y="457.3" font-size="4.6" font-weight="bold" transform="rotate(-90 694 457.3)" dy="3">Canon</text><text x="718" y="429.8" font-size="4.6" font-weight="bold" transform="rotate(-90 718 429.8)" dy="3">Canon</text><text x="553" y="509.9" font-size="4.6" font-weight="bold" transform="rotate(-90 553 509.9)" dy="3">Canon</text><text x="577" y="482.4" font-size="4.6" font-weight="bold" transform="rotate(-90 577 482.4)" dy="3">Canon</text><text x="623.5" y="509.9" font-size="4.6" font-weight="bold" transform="rotate(-90 623.5 509.9)" dy="3">Canon</text><text x="647.5" y="482.4" font-size="4.6" font-weight="bold" transform="rotate(-90 647.5 482.4)" dy="3">Canon</text><text x="694" y="509.9" font-size="4.6" font-weight="bold" transform="rotate(-90 694 509.9)" dy="3">Canon</text><text x="718" y="482.4" font-size="4.6" font-weight="bold" transform="rotate(-90 718 482.4)" dy="3">Canon</text><text x="553" y="562.5" font-size="4.6" font-weight="bold" transform="rotate(-90 553 562.5)" dy="3">Canon</text><text x="577" y="535" font-size="4.6" font-weight="bold" transform="rotate(-90 577 535)" dy="3">Canon</text><text x="623.5" y="562.5" font-size="4.6" font-weight="bold" transform="rotate(-90 623.5 562.5)" dy="3">Canon</text><text x="647.5" y="535" font-size="4.6" font-weight="bold" transform="rotate(-90 647.5 535)" dy="3">Canon</text><text x="694" y="562.5" font-size="4.6" font-weight="bold" transform="rotate(-90 694 562.5)" dy="3">Canon</text><text x="718" y="535" font-size="4.6" font-weight="bold" transform="rotate(-90 718 535)" dy="3">Canon</text></g><g transform="translate(549 409.3) rotate(0) scale(.9)" fill="none" stroke="#3a5580" stroke-width="1" stroke-linecap="round"><path d="M-5.2-.7L1.8-3.4M-4.4-.5L3.4-2"/><circle cx="2.6" cy="-4.7" r="1.3"/><circle cx="4.9" cy="-2" r="1.3"/></g><g transform="translate(549 567.2) rotate(180) scale(.9)" fill="none" stroke="#3a5580" stroke-width="1" stroke-linecap="round"><path d="M-5.2-.7L1.8-3.4M-4.4-.5L3.4-2"/><circle cx="2.6" cy="-4.7" r="1.3"/><circle cx="4.9" cy="-2" r="1.3"/></g><g transform="translate(549 461.9) rotate(0) scale(.9)" fill="none" stroke="#3a5580" stroke-width="1" stroke-linecap="round"><path d="M-5.2-.7L1.8-3.4M-4.4-.5L3.4-2"/><circle cx="2.6" cy="-4.7" r="1.3"/><circle cx="4.9" cy="-2" r="1.3"/></g><g transform="translate(549 461.9) rotate(180) scale(.9)" fill="none" stroke="#3a5580" stroke-width="1" stroke-linecap="round"><path d="M-5.2-.7L1.8-3.4M-4.4-.5L3.4-2"/><circle cx="2.6" cy="-4.7" r="1.3"/><circle cx="4.9" cy="-2" r="1.3"/></g><g transform="translate(549 514.5) rotate(0) scale(.9)" fill="none" stroke="#3a5580" stroke-width="1" stroke-linecap="round"><path d="M-5.2-.7L1.8-3.4M-4.4-.5L3.4-2"/><circle cx="2.6" cy="-4.7" r="1.3"/><circle cx="4.9" cy="-2" r="1.3"/></g><g transform="translate(549 514.5) rotate(180) scale(.9)" fill="none" stroke="#3a5580" stroke-width="1" stroke-linecap="round"><path d="M-5.2-.7L1.8-3.4M-4.4-.5L3.4-2"/><circle cx="2.6" cy="-4.7" r="1.3"/><circle cx="4.9" cy="-2" r="1.3"/></g><g transform="translate(584.2 409.3) rotate(0) scale(.9)" fill="none" stroke="#3a5580" stroke-width="1" stroke-linecap="round"><path d="M-5.2-.7L1.8-3.4M-4.4-.5L3.4-2"/><circle cx="2.6" cy="-4.7" r="1.3"/><circle cx="4.9" cy="-2" r="1.3"/></g><g transform="translate(584.2 567.2) rotate(180) scale(.9)" fill="none" stroke="#3a5580" stroke-width="1" stroke-linecap="round"><path d="M-5.2-.7L1.8-3.4M-4.4-.5L3.4-2"/><circle cx="2.6" cy="-4.7" r="1.3"/><circle cx="4.9" cy="-2" r="1.3"/></g><g transform="translate(584.2 461.9) rotate(0) scale(.9)" fill="none" stroke="#3a5580" stroke-width="1" stroke-linecap="round"><path d="M-5.2-.7L1.8-3.4M-4.4-.5L3.4-2"/><circle cx="2.6" cy="-4.7" r="1.3"/><circle cx="4.9" cy="-2" r="1.3"/></g><g transform="translate(584.2 461.9) rotate(180) scale(.9)" fill="none" stroke="#3a5580" stroke-width="1" stroke-linecap="round"><path d="M-5.2-.7L1.8-3.4M-4.4-.5L3.4-2"/><circle cx="2.6" cy="-4.7" r="1.3"/><circle cx="4.9" cy="-2" r="1.3"/></g><g transform="translate(584.2 514.5) rotate(0) scale(.9)" fill="none" stroke="#3a5580" stroke-width="1" stroke-linecap="round"><path d="M-5.2-.7L1.8-3.4M-4.4-.5L3.4-2"/><circle cx="2.6" cy="-4.7" r="1.3"/><circle cx="4.9" cy="-2" r="1.3"/></g><g transform="translate(584.2 514.5) rotate(180) scale(.9)" fill="none" stroke="#3a5580" stroke-width="1" stroke-linecap="round"><path d="M-5.2-.7L1.8-3.4M-4.4-.5L3.4-2"/><circle cx="2.6" cy="-4.7" r="1.3"/><circle cx="4.9" cy="-2" r="1.3"/></g><g transform="translate(619.5 409.3) rotate(0) scale(.9)" fill="none" stroke="#3a5580" stroke-width="1" stroke-linecap="round"><path d="M-5.2-.7L1.8-3.4M-4.4-.5L3.4-2"/><circle cx="2.6" cy="-4.7" r="1.3"/><circle cx="4.9" cy="-2" r="1.3"/></g><g transform="translate(619.5 567.2) rotate(180) scale(.9)" fill="none" stroke="#3a5580" stroke-width="1" stroke-linecap="round"><path d="M-5.2-.7L1.8-3.4M-4.4-.5L3.4-2"/><circle cx="2.6" cy="-4.7" r="1.3"/><circle cx="4.9" cy="-2" r="1.3"/></g><g transform="translate(619.5 461.9) rotate(0) scale(.9)" fill="none" stroke="#3a5580" stroke-width="1" stroke-linecap="round"><path d="M-5.2-.7L1.8-3.4M-4.4-.5L3.4-2"/><circle cx="2.6" cy="-4.7" r="1.3"/><circle cx="4.9" cy="-2" r="1.3"/></g><g transform="translate(619.5 461.9) rotate(180) scale(.9)" fill="none" stroke="#3a5580" stroke-width="1" stroke-linecap="round"><path d="M-5.2-.7L1.8-3.4M-4.4-.5L3.4-2"/><circle cx="2.6" cy="-4.7" r="1.3"/><circle cx="4.9" cy="-2" r="1.3"/></g><g transform="translate(619.5 514.5) rotate(0) scale(.9)" fill="none" stroke="#3a5580" stroke-width="1" stroke-linecap="round"><path d="M-5.2-.7L1.8-3.4M-4.4-.5L3.4-2"/><circle cx="2.6" cy="-4.7" r="1.3"/><circle cx="4.9" cy="-2" r="1.3"/></g><g transform="translate(619.5 514.5) rotate(180) scale(.9)" fill="none" stroke="#3a5580" stroke-width="1" stroke-linecap="round"><path d="M-5.2-.7L1.8-3.4M-4.4-.5L3.4-2"/><circle cx="2.6" cy="-4.7" r="1.3"/><circle cx="4.9" cy="-2" r="1.3"/></g><g transform="translate(654.8 409.3) rotate(0) scale(.9)" fill="none" stroke="#3a5580" stroke-width="1" stroke-linecap="round"><path d="M-5.2-.7L1.8-3.4M-4.4-.5L3.4-2"/><circle cx="2.6" cy="-4.7" r="1.3"/><circle cx="4.9" cy="-2" r="1.3"/></g><g transform="translate(654.8 567.2) rotate(180) scale(.9)" fill="none" stroke="#3a5580" stroke-width="1" stroke-linecap="round"><path d="M-5.2-.7L1.8-3.4M-4.4-.5L3.4-2"/><circle cx="2.6" cy="-4.7" r="1.3"/><circle cx="4.9" cy="-2" r="1.3"/></g><g transform="translate(654.8 461.9) rotate(0) scale(.9)" fill="none" stroke="#3a5580" stroke-width="1" stroke-linecap="round"><path d="M-5.2-.7L1.8-3.4M-4.4-.5L3.4-2"/><circle cx="2.6" cy="-4.7" r="1.3"/><circle cx="4.9" cy="-2" r="1.3"/></g><g transform="translate(654.8 461.9) rotate(180) scale(.9)" fill="none" stroke="#3a5580" stroke-width="1" stroke-linecap="round"><path d="M-5.2-.7L1.8-3.4M-4.4-.5L3.4-2"/><circle cx="2.6" cy="-4.7" r="1.3"/><circle cx="4.9" cy="-2" r="1.3"/></g><g transform="translate(654.8 514.5) rotate(0) scale(.9)" fill="none" stroke="#3a5580" stroke-width="1" stroke-linecap="round"><path d="M-5.2-.7L1.8-3.4M-4.4-.5L3.4-2"/><circle cx="2.6" cy="-4.7" r="1.3"/><circle cx="4.9" cy="-2" r="1.3"/></g><g transform="translate(654.8 514.5) rotate(180) scale(.9)" fill="none" stroke="#3a5580" stroke-width="1" stroke-linecap="round"><path d="M-5.2-.7L1.8-3.4M-4.4-.5L3.4-2"/><circle cx="2.6" cy="-4.7" r="1.3"/><circle cx="4.9" cy="-2" r="1.3"/></g><g transform="translate(690 409.3) rotate(0) scale(.9)" fill="none" stroke="#3a5580" stroke-width="1" stroke-linecap="round"><path d="M-5.2-.7L1.8-3.4M-4.4-.5L3.4-2"/><circle cx="2.6" cy="-4.7" r="1.3"/><circle cx="4.9" cy="-2" r="1.3"/></g><g transform="translate(690 567.2) rotate(180) scale(.9)" fill="none" stroke="#3a5580" stroke-width="1" stroke-linecap="round"><path d="M-5.2-.7L1.8-3.4M-4.4-.5L3.4-2"/><circle cx="2.6" cy="-4.7" r="1.3"/><circle cx="4.9" cy="-2" r="1.3"/></g><g transform="translate(690 461.9) rotate(0) scale(.9)" fill="none" stroke="#3a5580" stroke-width="1" stroke-linecap="round"><path d="M-5.2-.7L1.8-3.4M-4.4-.5L3.4-2"/><circle cx="2.6" cy="-4.7" r="1.3"/><circle cx="4.9" cy="-2" r="1.3"/></g><g transform="translate(690 461.9) rotate(180) scale(.9)" fill="none" stroke="#3a5580" stroke-width="1" stroke-linecap="round"><path d="M-5.2-.7L1.8-3.4M-4.4-.5L3.4-2"/><circle cx="2.6" cy="-4.7" r="1.3"/><circle cx="4.9" cy="-2" r="1.3"/></g><g transform="translate(690 514.5) rotate(0) scale(.9)" fill="none" stroke="#3a5580" stroke-width="1" stroke-linecap="round"><path d="M-5.2-.7L1.8-3.4M-4.4-.5L3.4-2"/><circle cx="2.6" cy="-4.7" r="1.3"/><circle cx="4.9" cy="-2" r="1.3"/></g><g transform="translate(690 514.5) rotate(180) scale(.9)" fill="none" stroke="#3a5580" stroke-width="1" stroke-linecap="round"><path d="M-5.2-.7L1.8-3.4M-4.4-.5L3.4-2"/><circle cx="2.6" cy="-4.7" r="1.3"/><circle cx="4.9" cy="-2" r="1.3"/></g><g transform="translate(725.2 409.3) rotate(0) scale(.9)" fill="none" stroke="#3a5580" stroke-width="1" stroke-linecap="round"><path d="M-5.2-.7L1.8-3.4M-4.4-.5L3.4-2"/><circle cx="2.6" cy="-4.7" r="1.3"/><circle cx="4.9" cy="-2" r="1.3"/></g><g transform="translate(725.2 567.2) rotate(180) scale(.9)" fill="none" stroke="#3a5580" stroke-width="1" stroke-linecap="round"><path d="M-5.2-.7L1.8-3.4M-4.4-.5L3.4-2"/><circle cx="2.6" cy="-4.7" r="1.3"/><circle cx="4.9" cy="-2" r="1.3"/></g><g transform="translate(725.2 461.9) rotate(0) scale(.9)" fill="none" stroke="#3a5580" stroke-width="1" stroke-linecap="round"><path d="M-5.2-.7L1.8-3.4M-4.4-.5L3.4-2"/><circle cx="2.6" cy="-4.7" r="1.3"/><circle cx="4.9" cy="-2" r="1.3"/></g><g transform="translate(725.2 461.9) rotate(180) scale(.9)" fill="none" stroke="#3a5580" stroke-width="1" stroke-linecap="round"><path d="M-5.2-.7L1.8-3.4M-4.4-.5L3.4-2"/><circle cx="2.6" cy="-4.7" r="1.3"/><circle cx="4.9" cy="-2" r="1.3"/></g><g transform="translate(725.2 514.5) rotate(0) scale(.9)" fill="none" stroke="#3a5580" stroke-width="1" stroke-linecap="round"><path d="M-5.2-.7L1.8-3.4M-4.4-.5L3.4-2"/><circle cx="2.6" cy="-4.7" r="1.3"/><circle cx="4.9" cy="-2" r="1.3"/></g><g transform="translate(725.2 514.5) rotate(180) scale(.9)" fill="none" stroke="#3a5580" stroke-width="1" stroke-linecap="round"><path d="M-5.2-.7L1.8-3.4M-4.4-.5L3.4-2"/><circle cx="2.6" cy="-4.7" r="1.3"/><circle cx="4.9" cy="-2" r="1.3"/></g><g transform="translate(531.4 436.8) rotate(-90) scale(.9)" fill="none" stroke="#3a5580" stroke-width="1" stroke-linecap="round"><path d="M-5.2-.7L1.8-3.4M-4.4-.5L3.4-2"/><circle cx="2.6" cy="-4.7" r="1.3"/><circle cx="4.9" cy="-2" r="1.3"/></g><g transform="translate(566.6 436.8) rotate(-90) scale(.9)" fill="none" stroke="#3a5580" stroke-width="1" stroke-linecap="round"><path d="M-5.2-.7L1.8-3.4M-4.4-.5L3.4-2"/><circle cx="2.6" cy="-4.7" r="1.3"/><circle cx="4.9" cy="-2" r="1.3"/></g><g transform="translate(566.6 436.8) rotate(90) scale(.9)" fill="none" stroke="#3a5580" stroke-width="1" stroke-linecap="round"><path d="M-5.2-.7L1.8-3.4M-4.4-.5L3.4-2"/><circle cx="2.6" cy="-4.7" r="1.3"/><circle cx="4.9" cy="-2" r="1.3"/></g><g transform="translate(601.9 436.8) rotate(-90) scale(.9)" fill="none" stroke="#3a5580" stroke-width="1" stroke-linecap="round"><path d="M-5.2-.7L1.8-3.4M-4.4-.5L3.4-2"/><circle cx="2.6" cy="-4.7" r="1.3"/><circle cx="4.9" cy="-2" r="1.3"/></g><g transform="translate(601.9 436.8) rotate(90) scale(.9)" fill="none" stroke="#3a5580" stroke-width="1" stroke-linecap="round"><path d="M-5.2-.7L1.8-3.4M-4.4-.5L3.4-2"/><circle cx="2.6" cy="-4.7" r="1.3"/><circle cx="4.9" cy="-2" r="1.3"/></g><g transform="translate(637.1 436.8) rotate(-90) scale(.9)" fill="none" stroke="#3a5580" stroke-width="1" stroke-linecap="round"><path d="M-5.2-.7L1.8-3.4M-4.4-.5L3.4-2"/><circle cx="2.6" cy="-4.7" r="1.3"/><circle cx="4.9" cy="-2" r="1.3"/></g><g transform="translate(637.1 436.8) rotate(90) scale(.9)" fill="none" stroke="#3a5580" stroke-width="1" stroke-linecap="round"><path d="M-5.2-.7L1.8-3.4M-4.4-.5L3.4-2"/><circle cx="2.6" cy="-4.7" r="1.3"/><circle cx="4.9" cy="-2" r="1.3"/></g><g transform="translate(672.4 436.8) rotate(-90) scale(.9)" fill="none" stroke="#3a5580" stroke-width="1" stroke-linecap="round"><path d="M-5.2-.7L1.8-3.4M-4.4-.5L3.4-2"/><circle cx="2.6" cy="-4.7" r="1.3"/><circle cx="4.9" cy="-2" r="1.3"/></g><g transform="translate(672.4 436.8) rotate(90) scale(.9)" fill="none" stroke="#3a5580" stroke-width="1" stroke-linecap="round"><path d="M-5.2-.7L1.8-3.4M-4.4-.5L3.4-2"/><circle cx="2.6" cy="-4.7" r="1.3"/><circle cx="4.9" cy="-2" r="1.3"/></g><g transform="translate(707.6 436.8) rotate(-90) scale(.9)" fill="none" stroke="#3a5580" stroke-width="1" stroke-linecap="round"><path d="M-5.2-.7L1.8-3.4M-4.4-.5L3.4-2"/><circle cx="2.6" cy="-4.7" r="1.3"/><circle cx="4.9" cy="-2" r="1.3"/></g><g transform="translate(707.6 436.8) rotate(90) scale(.9)" fill="none" stroke="#3a5580" stroke-width="1" stroke-linecap="round"><path d="M-5.2-.7L1.8-3.4M-4.4-.5L3.4-2"/><circle cx="2.6" cy="-4.7" r="1.3"/><circle cx="4.9" cy="-2" r="1.3"/></g><g transform="translate(742.9 436.8) rotate(90) scale(.9)" fill="none" stroke="#3a5580" stroke-width="1" stroke-linecap="round"><path d="M-5.2-.7L1.8-3.4M-4.4-.5L3.4-2"/><circle cx="2.6" cy="-4.7" r="1.3"/><circle cx="4.9" cy="-2" r="1.3"/></g><g transform="translate(531.4 489.4) rotate(-90) scale(.9)" fill="none" stroke="#3a5580" stroke-width="1" stroke-linecap="round"><path d="M-5.2-.7L1.8-3.4M-4.4-.5L3.4-2"/><circle cx="2.6" cy="-4.7" r="1.3"/><circle cx="4.9" cy="-2" r="1.3"/></g><g transform="translate(566.6 489.4) rotate(-90) scale(.9)" fill="none" stroke="#3a5580" stroke-width="1" stroke-linecap="round"><path d="M-5.2-.7L1.8-3.4M-4.4-.5L3.4-2"/><circle cx="2.6" cy="-4.7" r="1.3"/><circle cx="4.9" cy="-2" r="1.3"/></g><g transform="translate(566.6 489.4) rotate(90) scale(.9)" fill="none" stroke="#3a5580" stroke-width="1" stroke-linecap="round"><path d="M-5.2-.7L1.8-3.4M-4.4-.5L3.4-2"/><circle cx="2.6" cy="-4.7" r="1.3"/><circle cx="4.9" cy="-2" r="1.3"/></g><g transform="translate(601.9 489.4) rotate(-90) scale(.9)" fill="none" stroke="#3a5580" stroke-width="1" stroke-linecap="round"><path d="M-5.2-.7L1.8-3.4M-4.4-.5L3.4-2"/><circle cx="2.6" cy="-4.7" r="1.3"/><circle cx="4.9" cy="-2" r="1.3"/></g><g transform="translate(601.9 489.4) rotate(90) scale(.9)" fill="none" stroke="#3a5580" stroke-width="1" stroke-linecap="round"><path d="M-5.2-.7L1.8-3.4M-4.4-.5L3.4-2"/><circle cx="2.6" cy="-4.7" r="1.3"/><circle cx="4.9" cy="-2" r="1.3"/></g><g transform="translate(637.1 489.4) rotate(-90) scale(.9)" fill="none" stroke="#3a5580" stroke-width="1" stroke-linecap="round"><path d="M-5.2-.7L1.8-3.4M-4.4-.5L3.4-2"/><circle cx="2.6" cy="-4.7" r="1.3"/><circle cx="4.9" cy="-2" r="1.3"/></g><g transform="translate(637.1 489.4) rotate(90) scale(.9)" fill="none" stroke="#3a5580" stroke-width="1" stroke-linecap="round"><path d="M-5.2-.7L1.8-3.4M-4.4-.5L3.4-2"/><circle cx="2.6" cy="-4.7" r="1.3"/><circle cx="4.9" cy="-2" r="1.3"/></g><g transform="translate(672.4 489.4) rotate(-90) scale(.9)" fill="none" stroke="#3a5580" stroke-width="1" stroke-linecap="round"><path d="M-5.2-.7L1.8-3.4M-4.4-.5L3.4-2"/><circle cx="2.6" cy="-4.7" r="1.3"/><circle cx="4.9" cy="-2" r="1.3"/></g><g transform="translate(672.4 489.4) rotate(90) scale(.9)" fill="none" stroke="#3a5580" stroke-width="1" stroke-linecap="round"><path d="M-5.2-.7L1.8-3.4M-4.4-.5L3.4-2"/><circle cx="2.6" cy="-4.7" r="1.3"/><circle cx="4.9" cy="-2" r="1.3"/></g><g transform="translate(707.6 489.4) rotate(-90) scale(.9)" fill="none" stroke="#3a5580" stroke-width="1" stroke-linecap="round"><path d="M-5.2-.7L1.8-3.4M-4.4-.5L3.4-2"/><circle cx="2.6" cy="-4.7" r="1.3"/><circle cx="4.9" cy="-2" r="1.3"/></g><g transform="translate(707.6 489.4) rotate(90) scale(.9)" fill="none" stroke="#3a5580" stroke-width="1" stroke-linecap="round"><path d="M-5.2-.7L1.8-3.4M-4.4-.5L3.4-2"/><circle cx="2.6" cy="-4.7" r="1.3"/><circle cx="4.9" cy="-2" r="1.3"/></g><g transform="translate(742.9 489.4) rotate(90) scale(.9)" fill="none" stroke="#3a5580" stroke-width="1" stroke-linecap="round"><path d="M-5.2-.7L1.8-3.4M-4.4-.5L3.4-2"/><circle cx="2.6" cy="-4.7" r="1.3"/><circle cx="4.9" cy="-2" r="1.3"/></g><g transform="translate(531.4 542) rotate(-90) scale(.9)" fill="none" stroke="#3a5580" stroke-width="1" stroke-linecap="round"><path d="M-5.2-.7L1.8-3.4M-4.4-.5L3.4-2"/><circle cx="2.6" cy="-4.7" r="1.3"/><circle cx="4.9" cy="-2" r="1.3"/></g><g transform="translate(566.6 542) rotate(-90) scale(.9)" fill="none" stroke="#3a5580" stroke-width="1" stroke-linecap="round"><path d="M-5.2-.7L1.8-3.4M-4.4-.5L3.4-2"/><circle cx="2.6" cy="-4.7" r="1.3"/><circle cx="4.9" cy="-2" r="1.3"/></g><g transform="translate(566.6 542) rotate(90) scale(.9)" fill="none" stroke="#3a5580" stroke-width="1" stroke-linecap="round"><path d="M-5.2-.7L1.8-3.4M-4.4-.5L3.4-2"/><circle cx="2.6" cy="-4.7" r="1.3"/><circle cx="4.9" cy="-2" r="1.3"/></g><g transform="translate(601.9 542) rotate(-90) scale(.9)" fill="none" stroke="#3a5580" stroke-width="1" stroke-linecap="round"><path d="M-5.2-.7L1.8-3.4M-4.4-.5L3.4-2"/><circle cx="2.6" cy="-4.7" r="1.3"/><circle cx="4.9" cy="-2" r="1.3"/></g><g transform="translate(601.9 542) rotate(90) scale(.9)" fill="none" stroke="#3a5580" stroke-width="1" stroke-linecap="round"><path d="M-5.2-.7L1.8-3.4M-4.4-.5L3.4-2"/><circle cx="2.6" cy="-4.7" r="1.3"/><circle cx="4.9" cy="-2" r="1.3"/></g><g transform="translate(637.1 542) rotate(-90) scale(.9)" fill="none" stroke="#3a5580" stroke-width="1" stroke-linecap="round"><path d="M-5.2-.7L1.8-3.4M-4.4-.5L3.4-2"/><circle cx="2.6" cy="-4.7" r="1.3"/><circle cx="4.9" cy="-2" r="1.3"/></g><g transform="translate(637.1 542) rotate(90) scale(.9)" fill="none" stroke="#3a5580" stroke-width="1" stroke-linecap="round"><path d="M-5.2-.7L1.8-3.4M-4.4-.5L3.4-2"/><circle cx="2.6" cy="-4.7" r="1.3"/><circle cx="4.9" cy="-2" r="1.3"/></g><g transform="translate(672.4 542) rotate(-90) scale(.9)" fill="none" stroke="#3a5580" stroke-width="1" stroke-linecap="round"><path d="M-5.2-.7L1.8-3.4M-4.4-.5L3.4-2"/><circle cx="2.6" cy="-4.7" r="1.3"/><circle cx="4.9" cy="-2" r="1.3"/></g><g transform="translate(672.4 542) rotate(90) scale(.9)" fill="none" stroke="#3a5580" stroke-width="1" stroke-linecap="round"><path d="M-5.2-.7L1.8-3.4M-4.4-.5L3.4-2"/><circle cx="2.6" cy="-4.7" r="1.3"/><circle cx="4.9" cy="-2" r="1.3"/></g><g transform="translate(707.6 542) rotate(-90) scale(.9)" fill="none" stroke="#3a5580" stroke-width="1" stroke-linecap="round"><path d="M-5.2-.7L1.8-3.4M-4.4-.5L3.4-2"/><circle cx="2.6" cy="-4.7" r="1.3"/><circle cx="4.9" cy="-2" r="1.3"/></g><g transform="translate(707.6 542) rotate(90) scale(.9)" fill="none" stroke="#3a5580" stroke-width="1" stroke-linecap="round"><path d="M-5.2-.7L1.8-3.4M-4.4-.5L3.4-2"/><circle cx="2.6" cy="-4.7" r="1.3"/><circle cx="4.9" cy="-2" r="1.3"/></g><g transform="translate(742.9 542) rotate(90) scale(.9)" fill="none" stroke="#3a5580" stroke-width="1" stroke-linecap="round"><path d="M-5.2-.7L1.8-3.4M-4.4-.5L3.4-2"/><circle cx="2.6" cy="-4.7" r="1.3"/><circle cx="4.9" cy="-2" r="1.3"/></g><rect x="768" y="410" width="245.5" height="173.4" fill="#4c5560"/><rect x="766" y="408" width="245.5" height="173.4" fill="#fff"/><path d="M782.9 412.4V576.3M818 412.4V576.3M853.1 412.4V576.3M888.3 412.4V576.3M923.4 412.4V576.3M958.5 412.4V576.3M993.6 412.4V576.3M779.9 415.4H996.6M779.9 467.8H996.6M779.9 520.5H996.6M779.9 573.3H996.6" stroke="#d0d9e5" stroke-width="1" stroke-dasharray="3 1.2" fill="none"/><g transform="translate(800.5 415.4) rotate(0) scale(.9)" fill="none" stroke="#3a5580" stroke-width="1" stroke-linecap="round"><path d="M-5.2-.7L1.8-3.4M-4.4-.5L3.4-2"/><circle cx="2.6" cy="-4.7" r="1.3"/><circle cx="4.9" cy="-2" r="1.3"/></g><g transform="translate(800.5 573.3) rotate(180) scale(.9)" fill="none" stroke="#3a5580" stroke-width="1" stroke-linecap="round"><path d="M-5.2-.7L1.8-3.4M-4.4-.5L3.4-2"/><circle cx="2.6" cy="-4.7" r="1.3"/><circle cx="4.9" cy="-2" r="1.3"/></g><g transform="translate(800.5 467.8) rotate(0) scale(.9)" fill="none" stroke="#3a5580" stroke-width="1" stroke-linecap="round"><path d="M-5.2-.7L1.8-3.4M-4.4-.5L3.4-2"/><circle cx="2.6" cy="-4.7" r="1.3"/><circle cx="4.9" cy="-2" r="1.3"/></g><g transform="translate(800.5 467.8) rotate(180) scale(.9)" fill="none" stroke="#3a5580" stroke-width="1" stroke-linecap="round"><path d="M-5.2-.7L1.8-3.4M-4.4-.5L3.4-2"/><circle cx="2.6" cy="-4.7" r="1.3"/><circle cx="4.9" cy="-2" r="1.3"/></g><g transform="translate(800.5 520.5) rotate(0) scale(.9)" fill="none" stroke="#3a5580" stroke-width="1" stroke-linecap="round"><path d="M-5.2-.7L1.8-3.4M-4.4-.5L3.4-2"/><circle cx="2.6" cy="-4.7" r="1.3"/><circle cx="4.9" cy="-2" r="1.3"/></g><g transform="translate(800.5 520.5) rotate(180) scale(.9)" fill="none" stroke="#3a5580" stroke-width="1" stroke-linecap="round"><path d="M-5.2-.7L1.8-3.4M-4.4-.5L3.4-2"/><circle cx="2.6" cy="-4.7" r="1.3"/><circle cx="4.9" cy="-2" r="1.3"/></g><g transform="translate(835.6 415.4) rotate(0) scale(.9)" fill="none" stroke="#3a5580" stroke-width="1" stroke-linecap="round"><path d="M-5.2-.7L1.8-3.4M-4.4-.5L3.4-2"/><circle cx="2.6" cy="-4.7" r="1.3"/><circle cx="4.9" cy="-2" r="1.3"/></g><g transform="translate(835.6 573.3) rotate(180) scale(.9)" fill="none" stroke="#3a5580" stroke-width="1" stroke-linecap="round"><path d="M-5.2-.7L1.8-3.4M-4.4-.5L3.4-2"/><circle cx="2.6" cy="-4.7" r="1.3"/><circle cx="4.9" cy="-2" r="1.3"/></g><g transform="translate(835.6 467.8) rotate(0) scale(.9)" fill="none" stroke="#3a5580" stroke-width="1" stroke-linecap="round"><path d="M-5.2-.7L1.8-3.4M-4.4-.5L3.4-2"/><circle cx="2.6" cy="-4.7" r="1.3"/><circle cx="4.9" cy="-2" r="1.3"/></g><g transform="translate(835.6 467.8) rotate(180) scale(.9)" fill="none" stroke="#3a5580" stroke-width="1" stroke-linecap="round"><path d="M-5.2-.7L1.8-3.4M-4.4-.5L3.4-2"/><circle cx="2.6" cy="-4.7" r="1.3"/><circle cx="4.9" cy="-2" r="1.3"/></g><g transform="translate(835.6 520.5) rotate(0) scale(.9)" fill="none" stroke="#3a5580" stroke-width="1" stroke-linecap="round"><path d="M-5.2-.7L1.8-3.4M-4.4-.5L3.4-2"/><circle cx="2.6" cy="-4.7" r="1.3"/><circle cx="4.9" cy="-2" r="1.3"/></g><g transform="translate(835.6 520.5) rotate(180) scale(.9)" fill="none" stroke="#3a5580" stroke-width="1" stroke-linecap="round"><path d="M-5.2-.7L1.8-3.4M-4.4-.5L3.4-2"/><circle cx="2.6" cy="-4.7" r="1.3"/><circle cx="4.9" cy="-2" r="1.3"/></g><g transform="translate(870.7 415.4) rotate(0) scale(.9)" fill="none" stroke="#3a5580" stroke-width="1" stroke-linecap="round"><path d="M-5.2-.7L1.8-3.4M-4.4-.5L3.4-2"/><circle cx="2.6" cy="-4.7" r="1.3"/><circle cx="4.9" cy="-2" r="1.3"/></g><g transform="translate(870.7 573.3) rotate(180) scale(.9)" fill="none" stroke="#3a5580" stroke-width="1" stroke-linecap="round"><path d="M-5.2-.7L1.8-3.4M-4.4-.5L3.4-2"/><circle cx="2.6" cy="-4.7" r="1.3"/><circle cx="4.9" cy="-2" r="1.3"/></g><g transform="translate(870.7 467.8) rotate(0) scale(.9)" fill="none" stroke="#3a5580" stroke-width="1" stroke-linecap="round"><path d="M-5.2-.7L1.8-3.4M-4.4-.5L3.4-2"/><circle cx="2.6" cy="-4.7" r="1.3"/><circle cx="4.9" cy="-2" r="1.3"/></g><g transform="translate(870.7 467.8) rotate(180) scale(.9)" fill="none" stroke="#3a5580" stroke-width="1" stroke-linecap="round"><path d="M-5.2-.7L1.8-3.4M-4.4-.5L3.4-2"/><circle cx="2.6" cy="-4.7" r="1.3"/><circle cx="4.9" cy="-2" r="1.3"/></g><g transform="translate(870.7 520.5) rotate(0) scale(.9)" fill="none" stroke="#3a5580" stroke-width="1" stroke-linecap="round"><path d="M-5.2-.7L1.8-3.4M-4.4-.5L3.4-2"/><circle cx="2.6" cy="-4.7" r="1.3"/><circle cx="4.9" cy="-2" r="1.3"/></g><g transform="translate(870.7 520.5) rotate(180) scale(.9)" fill="none" stroke="#3a5580" stroke-width="1" stroke-linecap="round"><path d="M-5.2-.7L1.8-3.4M-4.4-.5L3.4-2"/><circle cx="2.6" cy="-4.7" r="1.3"/><circle cx="4.9" cy="-2" r="1.3"/></g><g transform="translate(905.9 415.4) rotate(0) scale(.9)" fill="none" stroke="#3a5580" stroke-width="1" stroke-linecap="round"><path d="M-5.2-.7L1.8-3.4M-4.4-.5L3.4-2"/><circle cx="2.6" cy="-4.7" r="1.3"/><circle cx="4.9" cy="-2" r="1.3"/></g><g transform="translate(905.9 573.3) rotate(180) scale(.9)" fill="none" stroke="#3a5580" stroke-width="1" stroke-linecap="round"><path d="M-5.2-.7L1.8-3.4M-4.4-.5L3.4-2"/><circle cx="2.6" cy="-4.7" r="1.3"/><circle cx="4.9" cy="-2" r="1.3"/></g><g transform="translate(905.9 467.8) rotate(0) scale(.9)" fill="none" stroke="#3a5580" stroke-width="1" stroke-linecap="round"><path d="M-5.2-.7L1.8-3.4M-4.4-.5L3.4-2"/><circle cx="2.6" cy="-4.7" r="1.3"/><circle cx="4.9" cy="-2" r="1.3"/></g><g transform="translate(905.9 467.8) rotate(180) scale(.9)" fill="none" stroke="#3a5580" stroke-width="1" stroke-linecap="round"><path d="M-5.2-.7L1.8-3.4M-4.4-.5L3.4-2"/><circle cx="2.6" cy="-4.7" r="1.3"/><circle cx="4.9" cy="-2" r="1.3"/></g><g transform="translate(905.9 520.5) rotate(0) scale(.9)" fill="none" stroke="#3a5580" stroke-width="1" stroke-linecap="round"><path d="M-5.2-.7L1.8-3.4M-4.4-.5L3.4-2"/><circle cx="2.6" cy="-4.7" r="1.3"/><circle cx="4.9" cy="-2" r="1.3"/></g><g transform="translate(905.9 520.5) rotate(180) scale(.9)" fill="none" stroke="#3a5580" stroke-width="1" stroke-linecap="round"><path d="M-5.2-.7L1.8-3.4M-4.4-.5L3.4-2"/><circle cx="2.6" cy="-4.7" r="1.3"/><circle cx="4.9" cy="-2" r="1.3"/></g><g transform="translate(941 415.4) rotate(0) scale(.9)" fill="none" stroke="#3a5580" stroke-width="1" stroke-linecap="round"><path d="M-5.2-.7L1.8-3.4M-4.4-.5L3.4-2"/><circle cx="2.6" cy="-4.7" r="1.3"/><circle cx="4.9" cy="-2" r="1.3"/></g><g transform="translate(941 573.3) rotate(180) scale(.9)" fill="none" stroke="#3a5580" stroke-width="1" stroke-linecap="round"><path d="M-5.2-.7L1.8-3.4M-4.4-.5L3.4-2"/><circle cx="2.6" cy="-4.7" r="1.3"/><circle cx="4.9" cy="-2" r="1.3"/></g><g transform="translate(941 467.8) rotate(0) scale(.9)" fill="none" stroke="#3a5580" stroke-width="1" stroke-linecap="round"><path d="M-5.2-.7L1.8-3.4M-4.4-.5L3.4-2"/><circle cx="2.6" cy="-4.7" r="1.3"/><circle cx="4.9" cy="-2" r="1.3"/></g><g transform="translate(941 467.8) rotate(180) scale(.9)" fill="none" stroke="#3a5580" stroke-width="1" stroke-linecap="round"><path d="M-5.2-.7L1.8-3.4M-4.4-.5L3.4-2"/><circle cx="2.6" cy="-4.7" r="1.3"/><circle cx="4.9" cy="-2" r="1.3"/></g><g transform="translate(941 520.5) rotate(0) scale(.9)" fill="none" stroke="#3a5580" stroke-width="1" stroke-linecap="round"><path d="M-5.2-.7L1.8-3.4M-4.4-.5L3.4-2"/><circle cx="2.6" cy="-4.7" r="1.3"/><circle cx="4.9" cy="-2" r="1.3"/></g><g transform="translate(941 520.5) rotate(180) scale(.9)" fill="none" stroke="#3a5580" stroke-width="1" stroke-linecap="round"><path d="M-5.2-.7L1.8-3.4M-4.4-.5L3.4-2"/><circle cx="2.6" cy="-4.7" r="1.3"/><circle cx="4.9" cy="-2" r="1.3"/></g><g transform="translate(976.1 415.4) rotate(0) scale(.9)" fill="none" stroke="#3a5580" stroke-width="1" stroke-linecap="round"><path d="M-5.2-.7L1.8-3.4M-4.4-.5L3.4-2"/><circle cx="2.6" cy="-4.7" r="1.3"/><circle cx="4.9" cy="-2" r="1.3"/></g><g transform="translate(976.1 573.3) rotate(180) scale(.9)" fill="none" stroke="#3a5580" stroke-width="1" stroke-linecap="round"><path d="M-5.2-.7L1.8-3.4M-4.4-.5L3.4-2"/><circle cx="2.6" cy="-4.7" r="1.3"/><circle cx="4.9" cy="-2" r="1.3"/></g><g transform="translate(976.1 467.8) rotate(0) scale(.9)" fill="none" stroke="#3a5580" stroke-width="1" stroke-linecap="round"><path d="M-5.2-.7L1.8-3.4M-4.4-.5L3.4-2"/><circle cx="2.6" cy="-4.7" r="1.3"/><circle cx="4.9" cy="-2" r="1.3"/></g><g transform="translate(976.1 467.8) rotate(180) scale(.9)" fill="none" stroke="#3a5580" stroke-width="1" stroke-linecap="round"><path d="M-5.2-.7L1.8-3.4M-4.4-.5L3.4-2"/><circle cx="2.6" cy="-4.7" r="1.3"/><circle cx="4.9" cy="-2" r="1.3"/></g><g transform="translate(976.1 520.5) rotate(0) scale(.9)" fill="none" stroke="#3a5580" stroke-width="1" stroke-linecap="round"><path d="M-5.2-.7L1.8-3.4M-4.4-.5L3.4-2"/><circle cx="2.6" cy="-4.7" r="1.3"/><circle cx="4.9" cy="-2" r="1.3"/></g><g transform="translate(976.1 520.5) rotate(180) scale(.9)" fill="none" stroke="#3a5580" stroke-width="1" stroke-linecap="round"><path d="M-5.2-.7L1.8-3.4M-4.4-.5L3.4-2"/><circle cx="2.6" cy="-4.7" r="1.3"/><circle cx="4.9" cy="-2" r="1.3"/></g><g transform="translate(782.9 441.7) rotate(-90) scale(.9)" fill="none" stroke="#3a5580" stroke-width="1" stroke-linecap="round"><path d="M-5.2-.7L1.8-3.4M-4.4-.5L3.4-2"/><circle cx="2.6" cy="-4.7" r="1.3"/><circle cx="4.9" cy="-2" r="1.3"/></g><g transform="translate(818 441.7) rotate(-90) scale(.9)" fill="none" stroke="#3a5580" stroke-width="1" stroke-linecap="round"><path d="M-5.2-.7L1.8-3.4M-4.4-.5L3.4-2"/><circle cx="2.6" cy="-4.7" r="1.3"/><circle cx="4.9" cy="-2" r="1.3"/></g><g transform="translate(818 441.7) rotate(90) scale(.9)" fill="none" stroke="#3a5580" stroke-width="1" stroke-linecap="round"><path d="M-5.2-.7L1.8-3.4M-4.4-.5L3.4-2"/><circle cx="2.6" cy="-4.7" r="1.3"/><circle cx="4.9" cy="-2" r="1.3"/></g><g transform="translate(853.1 441.7) rotate(-90) scale(.9)" fill="none" stroke="#3a5580" stroke-width="1" stroke-linecap="round"><path d="M-5.2-.7L1.8-3.4M-4.4-.5L3.4-2"/><circle cx="2.6" cy="-4.7" r="1.3"/><circle cx="4.9" cy="-2" r="1.3"/></g><g transform="translate(853.1 441.7) rotate(90) scale(.9)" fill="none" stroke="#3a5580" stroke-width="1" stroke-linecap="round"><path d="M-5.2-.7L1.8-3.4M-4.4-.5L3.4-2"/><circle cx="2.6" cy="-4.7" r="1.3"/><circle cx="4.9" cy="-2" r="1.3"/></g><g transform="translate(888.3 441.7) rotate(-90) scale(.9)" fill="none" stroke="#3a5580" stroke-width="1" stroke-linecap="round"><path d="M-5.2-.7L1.8-3.4M-4.4-.5L3.4-2"/><circle cx="2.6" cy="-4.7" r="1.3"/><circle cx="4.9" cy="-2" r="1.3"/></g><g transform="translate(888.3 441.7) rotate(90) scale(.9)" fill="none" stroke="#3a5580" stroke-width="1" stroke-linecap="round"><path d="M-5.2-.7L1.8-3.4M-4.4-.5L3.4-2"/><circle cx="2.6" cy="-4.7" r="1.3"/><circle cx="4.9" cy="-2" r="1.3"/></g><g transform="translate(923.4 441.7) rotate(-90) scale(.9)" fill="none" stroke="#3a5580" stroke-width="1" stroke-linecap="round"><path d="M-5.2-.7L1.8-3.4M-4.4-.5L3.4-2"/><circle cx="2.6" cy="-4.7" r="1.3"/><circle cx="4.9" cy="-2" r="1.3"/></g><g transform="translate(923.4 441.7) rotate(90) scale(.9)" fill="none" stroke="#3a5580" stroke-width="1" stroke-linecap="round"><path d="M-5.2-.7L1.8-3.4M-4.4-.5L3.4-2"/><circle cx="2.6" cy="-4.7" r="1.3"/><circle cx="4.9" cy="-2" r="1.3"/></g><g transform="translate(958.5 441.7) rotate(-90) scale(.9)" fill="none" stroke="#3a5580" stroke-width="1" stroke-linecap="round"><path d="M-5.2-.7L1.8-3.4M-4.4-.5L3.4-2"/><circle cx="2.6" cy="-4.7" r="1.3"/><circle cx="4.9" cy="-2" r="1.3"/></g><g transform="translate(958.5 441.7) rotate(90) scale(.9)" fill="none" stroke="#3a5580" stroke-width="1" stroke-linecap="round"><path d="M-5.2-.7L1.8-3.4M-4.4-.5L3.4-2"/><circle cx="2.6" cy="-4.7" r="1.3"/><circle cx="4.9" cy="-2" r="1.3"/></g><g transform="translate(993.6 441.7) rotate(90) scale(.9)" fill="none" stroke="#3a5580" stroke-width="1" stroke-linecap="round"><path d="M-5.2-.7L1.8-3.4M-4.4-.5L3.4-2"/><circle cx="2.6" cy="-4.7" r="1.3"/><circle cx="4.9" cy="-2" r="1.3"/></g><g transform="translate(782.9 494.1) rotate(-90) scale(.9)" fill="none" stroke="#3a5580" stroke-width="1" stroke-linecap="round"><path d="M-5.2-.7L1.8-3.4M-4.4-.5L3.4-2"/><circle cx="2.6" cy="-4.7" r="1.3"/><circle cx="4.9" cy="-2" r="1.3"/></g><g transform="translate(818 494.1) rotate(-90) scale(.9)" fill="none" stroke="#3a5580" stroke-width="1" stroke-linecap="round"><path d="M-5.2-.7L1.8-3.4M-4.4-.5L3.4-2"/><circle cx="2.6" cy="-4.7" r="1.3"/><circle cx="4.9" cy="-2" r="1.3"/></g><g transform="translate(818 494.1) rotate(90) scale(.9)" fill="none" stroke="#3a5580" stroke-width="1" stroke-linecap="round"><path d="M-5.2-.7L1.8-3.4M-4.4-.5L3.4-2"/><circle cx="2.6" cy="-4.7" r="1.3"/><circle cx="4.9" cy="-2" r="1.3"/></g><g transform="translate(853.1 494.1) rotate(-90) scale(.9)" fill="none" stroke="#3a5580" stroke-width="1" stroke-linecap="round"><path d="M-5.2-.7L1.8-3.4M-4.4-.5L3.4-2"/><circle cx="2.6" cy="-4.7" r="1.3"/><circle cx="4.9" cy="-2" r="1.3"/></g><g transform="translate(853.1 494.1) rotate(90) scale(.9)" fill="none" stroke="#3a5580" stroke-width="1" stroke-linecap="round"><path d="M-5.2-.7L1.8-3.4M-4.4-.5L3.4-2"/><circle cx="2.6" cy="-4.7" r="1.3"/><circle cx="4.9" cy="-2" r="1.3"/></g><g transform="translate(888.3 494.1) rotate(-90) scale(.9)" fill="none" stroke="#3a5580" stroke-width="1" stroke-linecap="round"><path d="M-5.2-.7L1.8-3.4M-4.4-.5L3.4-2"/><circle cx="2.6" cy="-4.7" r="1.3"/><circle cx="4.9" cy="-2" r="1.3"/></g><g transform="translate(888.3 494.1) rotate(90) scale(.9)" fill="none" stroke="#3a5580" stroke-width="1" stroke-linecap="round"><path d="M-5.2-.7L1.8-3.4M-4.4-.5L3.4-2"/><circle cx="2.6" cy="-4.7" r="1.3"/><circle cx="4.9" cy="-2" r="1.3"/></g><g transform="translate(923.4 494.1) rotate(-90) scale(.9)" fill="none" stroke="#3a5580" stroke-width="1" stroke-linecap="round"><path d="M-5.2-.7L1.8-3.4M-4.4-.5L3.4-2"/><circle cx="2.6" cy="-4.7" r="1.3"/><circle cx="4.9" cy="-2" r="1.3"/></g><g transform="translate(923.4 494.1) rotate(90) scale(.9)" fill="none" stroke="#3a5580" stroke-width="1" stroke-linecap="round"><path d="M-5.2-.7L1.8-3.4M-4.4-.5L3.4-2"/><circle cx="2.6" cy="-4.7" r="1.3"/><circle cx="4.9" cy="-2" r="1.3"/></g><g transform="translate(958.5 494.1) rotate(-90) scale(.9)" fill="none" stroke="#3a5580" stroke-width="1" stroke-linecap="round"><path d="M-5.2-.7L1.8-3.4M-4.4-.5L3.4-2"/><circle cx="2.6" cy="-4.7" r="1.3"/><circle cx="4.9" cy="-2" r="1.3"/></g><g transform="translate(958.5 494.1) rotate(90) scale(.9)" fill="none" stroke="#3a5580" stroke-width="1" stroke-linecap="round"><path d="M-5.2-.7L1.8-3.4M-4.4-.5L3.4-2"/><circle cx="2.6" cy="-4.7" r="1.3"/><circle cx="4.9" cy="-2" r="1.3"/></g><g transform="translate(993.6 494.1) rotate(90) scale(.9)" fill="none" stroke="#3a5580" stroke-width="1" stroke-linecap="round"><path d="M-5.2-.7L1.8-3.4M-4.4-.5L3.4-2"/><circle cx="2.6" cy="-4.7" r="1.3"/><circle cx="4.9" cy="-2" r="1.3"/></g><g transform="translate(782.9 546.8) rotate(-90) scale(.9)" fill="none" stroke="#3a5580" stroke-width="1" stroke-linecap="round"><path d="M-5.2-.7L1.8-3.4M-4.4-.5L3.4-2"/><circle cx="2.6" cy="-4.7" r="1.3"/><circle cx="4.9" cy="-2" r="1.3"/></g><g transform="translate(818 546.8) rotate(-90) scale(.9)" fill="none" stroke="#3a5580" stroke-width="1" stroke-linecap="round"><path d="M-5.2-.7L1.8-3.4M-4.4-.5L3.4-2"/><circle cx="2.6" cy="-4.7" r="1.3"/><circle cx="4.9" cy="-2" r="1.3"/></g><g transform="translate(818 546.8) rotate(90) scale(.9)" fill="none" stroke="#3a5580" stroke-width="1" stroke-linecap="round"><path d="M-5.2-.7L1.8-3.4M-4.4-.5L3.4-2"/><circle cx="2.6" cy="-4.7" r="1.3"/><circle cx="4.9" cy="-2" r="1.3"/></g><g transform="translate(853.1 546.8) rotate(-90) scale(.9)" fill="none" stroke="#3a5580" stroke-width="1" stroke-linecap="round"><path d="M-5.2-.7L1.8-3.4M-4.4-.5L3.4-2"/><circle cx="2.6" cy="-4.7" r="1.3"/><circle cx="4.9" cy="-2" r="1.3"/></g><g transform="translate(853.1 546.8) rotate(90) scale(.9)" fill="none" stroke="#3a5580" stroke-width="1" stroke-linecap="round"><path d="M-5.2-.7L1.8-3.4M-4.4-.5L3.4-2"/><circle cx="2.6" cy="-4.7" r="1.3"/><circle cx="4.9" cy="-2" r="1.3"/></g><g transform="translate(888.3 546.8) rotate(-90) scale(.9)" fill="none" stroke="#3a5580" stroke-width="1" stroke-linecap="round"><path d="M-5.2-.7L1.8-3.4M-4.4-.5L3.4-2"/><circle cx="2.6" cy="-4.7" r="1.3"/><circle cx="4.9" cy="-2" r="1.3"/></g><g transform="translate(888.3 546.8) rotate(90) scale(.9)" fill="none" stroke="#3a5580" stroke-width="1" stroke-linecap="round"><path d="M-5.2-.7L1.8-3.4M-4.4-.5L3.4-2"/><circle cx="2.6" cy="-4.7" r="1.3"/><circle cx="4.9" cy="-2" r="1.3"/></g><g transform="translate(923.4 546.8) rotate(-90) scale(.9)" fill="none" stroke="#3a5580" stroke-width="1" stroke-linecap="round"><path d="M-5.2-.7L1.8-3.4M-4.4-.5L3.4-2"/><circle cx="2.6" cy="-4.7" r="1.3"/><circle cx="4.9" cy="-2" r="1.3"/></g><g transform="translate(923.4 546.8) rotate(90) scale(.9)" fill="none" stroke="#3a5580" stroke-width="1" stroke-linecap="round"><path d="M-5.2-.7L1.8-3.4M-4.4-.5L3.4-2"/><circle cx="2.6" cy="-4.7" r="1.3"/><circle cx="4.9" cy="-2" r="1.3"/></g><g transform="translate(958.5 546.8) rotate(-90) scale(.9)" fill="none" stroke="#3a5580" stroke-width="1" stroke-linecap="round"><path d="M-5.2-.7L1.8-3.4M-4.4-.5L3.4-2"/><circle cx="2.6" cy="-4.7" r="1.3"/><circle cx="4.9" cy="-2" r="1.3"/></g><g transform="translate(958.5 546.8) rotate(90) scale(.9)" fill="none" stroke="#3a5580" stroke-width="1" stroke-linecap="round"><path d="M-5.2-.7L1.8-3.4M-4.4-.5L3.4-2"/><circle cx="2.6" cy="-4.7" r="1.3"/><circle cx="4.9" cy="-2" r="1.3"/></g><g transform="translate(993.6 546.8) rotate(90) scale(.9)" fill="none" stroke="#3a5580" stroke-width="1" stroke-linecap="round"><path d="M-5.2-.7L1.8-3.4M-4.4-.5L3.4-2"/><circle cx="2.6" cy="-4.7" r="1.3"/><circle cx="4.9" cy="-2" r="1.3"/></g></svg><div class="abs" style="right:0;top:0;width:2px;bottom:0;background:#fff"></div></div><div class="btn" style="left:784px">Aceptar</div><div class="btn" style="left:897px">Cancelar</div></div></body></html>
